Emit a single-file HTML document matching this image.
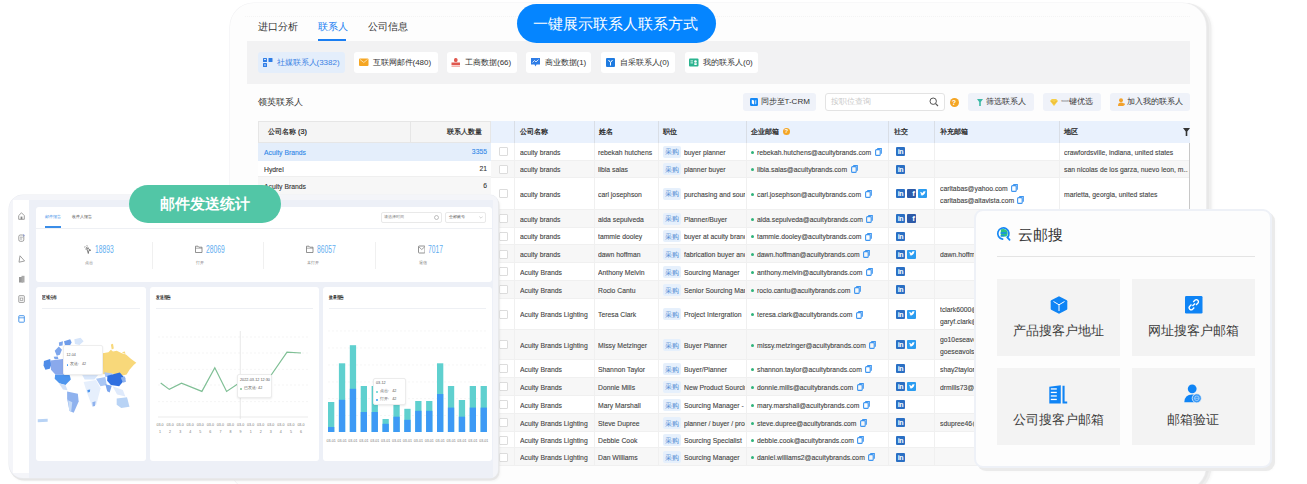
<!DOCTYPE html><html><head><meta charset="utf-8"><style>
html,body{margin:0;padding:0}
body{width:1307px;height:484px;overflow:hidden;background:#fff;position:relative;font-family:'Liberation Sans', sans-serif}
div{box-sizing:border-box}
.en{letter-spacing:-0.5px}
</style></head><body>
<div style="position:absolute;left:230px;top:3px;width:976px;height:487px;background:#fdfdfd;border-radius:24px;box-shadow:0 0 0 0.6px #f1f1f3, 2px 1px 0 1px #e8e8e8, 4px 1.5px 0 1.5px #efefef, 6px 2px 3px 1px rgba(0,0,0,0.03);"></div>
<div style="position:absolute;left:245px;top:16px;width:945px;height:1px;border-top:1px dotted #f4f4f4;"></div>
<div style="position:absolute;left:258px;top:19.50px;height:14.00px;line-height:14.00px;font-size:10px;color:#333;white-space:nowrap;">进口分析</div>
<div style="position:absolute;left:318px;top:19.50px;height:14.00px;line-height:14.00px;font-size:10px;color:#1a7ef2;white-space:nowrap;">联系人</div>
<div style="position:absolute;left:368px;top:19.50px;height:14.00px;line-height:14.00px;font-size:10px;color:#333;white-space:nowrap;">公司信息</div>
<div style="position:absolute;left:318px;top:39px;width:28px;height:2.5px;background:#1a7ef2;"></div>
<div style="position:absolute;left:247px;top:41px;width:943px;height:43px;background:#f2f2f3;"></div>
<div style="position:absolute;left:258px;top:52px;width:87px;height:21px;background:#e4eefb;border-radius:3px;"></div>
<svg style="position:absolute;left:262.5px;top:58px" width="10" height="9" viewBox="0 0 10 9"><rect x="0" y="0" width="4" height="4" rx="0.6" fill="#2f7de6"/><rect x="5.5" y="0" width="4" height="4" rx="0.6" fill="#2f7de6"/><rect x="0" y="5" width="4" height="4" rx="0.6" fill="#2f7de6"/><rect x="1" y="1" width="2" height="1" fill="#cfe2fb"/><rect x="1" y="6.5" width="2" height="1" fill="#cfe2fb"/></svg>
<div style="position:absolute;left:276.5px;top:57.20px;height:11.20px;line-height:11.20px;font-size:8px;color:#3b82e4;white-space:nowrap;">社媒联系人(3382)</div>
<div style="position:absolute;left:354px;top:52px;width:83.5px;height:21px;background:#ffffff;border-radius:3px;"></div>
<svg style="position:absolute;left:358.5px;top:58px" width="10" height="9" viewBox="0 0 10 9"><rect x="0" y="0.5" width="9.5" height="7.5" rx="1" fill="#f5a623"/><path d="M1 1.5 L4.75 4.5 L8.5 1.5" fill="none" stroke="#fff5dc" stroke-width="0.7"/></svg>
<div style="position:absolute;left:372.5px;top:57.20px;height:11.20px;line-height:11.20px;font-size:8px;color:#333;white-space:nowrap;">互联网邮件(480)</div>
<div style="position:absolute;left:446.5px;top:52px;width:70.5px;height:21px;background:#ffffff;border-radius:3px;"></div>
<svg style="position:absolute;left:451.0px;top:58px" width="10" height="9" viewBox="0 0 10 9"><rect x="3" y="0" width="3.5" height="4" rx="1.5" fill="#e0584f"/><rect x="0.5" y="4.5" width="8.5" height="2.5" fill="#e0584f"/><rect x="0.5" y="7.5" width="8.5" height="1.3" fill="#f0a09a"/></svg>
<div style="position:absolute;left:465.0px;top:57.20px;height:11.20px;line-height:11.20px;font-size:8px;color:#333;white-space:nowrap;">工商数据(66)</div>
<div style="position:absolute;left:526px;top:52px;width:65px;height:21px;background:#ffffff;border-radius:3px;"></div>
<svg style="position:absolute;left:530.5px;top:58px" width="10" height="9" viewBox="0 0 10 9"><path d="M0 0 H9 V6.5 H5.5 L4.5 8.5 L3.5 6.5 H0Z" fill="#2f7de6"/><path d="M1.5 4.5 L3.5 2.5 L5 4 L7.5 1.5" fill="none" stroke="#fff" stroke-width="0.8"/></svg>
<div style="position:absolute;left:544.5px;top:57.20px;height:11.20px;line-height:11.20px;font-size:8px;color:#333;white-space:nowrap;">商业数据(1)</div>
<div style="position:absolute;left:601px;top:52px;width:74px;height:21px;background:#ffffff;border-radius:3px;"></div>
<svg style="position:absolute;left:605.5px;top:58px" width="10" height="9" viewBox="0 0 10 9"><rect x="0" y="0" width="9" height="9" rx="1" fill="#1f7be0"/><path d="M2.5 2 L4.5 4.5 L6.5 2 M4.5 4.5 V7.5" fill="none" stroke="#fff" stroke-width="1"/></svg>
<div style="position:absolute;left:619.5px;top:57.20px;height:11.20px;line-height:11.20px;font-size:8px;color:#333;white-space:nowrap;">自采联系人(0)</div>
<div style="position:absolute;left:684.5px;top:52px;width:73.5px;height:21px;background:#ffffff;border-radius:3px;"></div>
<svg style="position:absolute;left:689.0px;top:58px" width="10" height="9" viewBox="0 0 10 9"><rect x="0" y="0.5" width="9.5" height="8" rx="1" fill="#2bb38f"/><circle cx="6.5" cy="3.5" r="1.3" fill="#fff"/><rect x="5" y="5.3" width="3" height="1.6" rx="0.8" fill="#fff"/><rect x="1.5" y="2.5" width="2.5" height="0.8" fill="#fff"/><rect x="1.5" y="4.5" width="2.5" height="0.8" fill="#fff"/></svg>
<div style="position:absolute;left:703.0px;top:57.20px;height:11.20px;line-height:11.20px;font-size:8px;color:#333;white-space:nowrap;">我的联系人(0)</div>
<div style="position:absolute;left:258px;top:96.00px;height:12.60px;line-height:12.60px;font-size:9px;color:#333;white-space:nowrap;">领英联系人</div>
<div style="position:absolute;left:742.5px;top:93px;width:73.0px;height:18px;background:#eff2f9;border-radius:3px;"></div>
<svg style="position:absolute;left:750px;top:98px" width="8" height="8" viewBox="0 0 8 8"><rect width="8" height="8" rx="1.2" fill="#1689f5"/><path d="M1.8 1.8 L4 2.6 V6.6 L1.8 5.6Z" fill="#fff"/><path d="M4.8 2.6 L6.3 2 V5.8 L4.8 6.4Z" fill="#9fd0fb"/></svg>
<div style="position:absolute;left:760.5px;top:96.40px;height:11.20px;line-height:11.20px;font-size:8px;color:#333;white-space:nowrap;">同步至T-CRM</div>
<div style="position:absolute;left:824.5px;top:92.5px;width:120.0px;height:18.5px;background:#fff;border:1px solid #e3e3e3;border-radius:3px;"></div>
<div style="position:absolute;left:831px;top:96.40px;height:11.20px;line-height:11.20px;font-size:8px;color:#c8c8c8;white-space:nowrap;">按职位查询</div>
<svg style="position:absolute;left:929px;top:97px" width="10" height="10" viewBox="0 0 10 10"><circle cx="4.2" cy="4.2" r="3.2" fill="none" stroke="#555" stroke-width="1"/><line x1="6.6" y1="6.6" x2="9" y2="9" stroke="#555" stroke-width="1.1"/></svg>
<div style="position:absolute;left:949.5px;top:97.5px;width:9.0px;height:9.0px;background:#f4a524;border-radius:50%;color:#fff;font-size:7px;line-height:9px;text-align:center;font-weight:bold;">?</div>
<div style="position:absolute;left:968px;top:93px;width:65.5px;height:18px;background:#eff2f9;border-radius:3px;"></div>
<svg style="position:absolute;left:976.5px;top:98.5px" width="6" height="7" viewBox="0 0 6 7"><path d="M0 0 H6 L3.8 3 V7 H2.2 V3Z" fill="#3cb9a6"/></svg>
<div style="position:absolute;left:985.5px;top:96.40px;height:11.20px;line-height:11.20px;font-size:8px;color:#333;white-space:nowrap;">筛选联系人</div>
<div style="position:absolute;left:1043px;top:93px;width:57.5px;height:18px;background:#eff2f9;border-radius:3px;"></div>
<svg style="position:absolute;left:1050px;top:98.5px" width="8" height="7" viewBox="0 0 8 7"><path d="M0 2 L1.8 0 H6.2 L8 2 L4 7Z" fill="#f5cf4a"/><path d="M1.5 2 L4 4.5 L6.5 2" fill="none" stroke="#e8a820" stroke-width="0.7"/></svg>
<div style="position:absolute;left:1060.5px;top:96.40px;height:11.20px;line-height:11.20px;font-size:8px;color:#333;white-space:nowrap;">一键优选</div>
<div style="position:absolute;left:1109.5px;top:93px;width:80.5px;height:18px;background:#eff2f9;border-radius:3px;"></div>
<svg style="position:absolute;left:1118px;top:98px" width="7" height="8" viewBox="0 0 7 8"><circle cx="3" cy="2.2" r="2" fill="#f2a12a"/><path d="M0 8 Q0 4.6 3 4.6 Q5 4.6 5.6 6 V8Z" fill="#f2a12a"/><rect x="4.6" y="5.8" width="2.4" height="0.9" fill="#f2a12a"/><rect x="5.35" y="5" width="0.9" height="2.5" fill="#f2a12a"/></svg>
<div style="position:absolute;left:1127px;top:96.40px;height:11.20px;line-height:11.20px;font-size:8px;color:#333;white-space:nowrap;">加入我的联系人</div>
<div style="position:absolute;left:258px;top:120.5px;width:233px;height:22.5px;background:#f5f5f5;border:1px solid #e6e6e6;"></div>
<div style="position:absolute;left:410px;top:120.5px;width:1px;height:22.5px;background:#e6e6e6;"></div>
<div style="position:absolute;left:268px;top:126.96px;height:10.08px;line-height:10.08px;font-size:7.2px;color:#222;white-space:nowrap;-webkit-text-stroke:0.2px #222;">公司名称 (3)</div>
<div style="position:absolute;left:0px;top:126.96px;height:10.08px;line-height:10.08px;font-size:7.2px;color:#222;white-space:nowrap;width:482px;text-align:right;-webkit-text-stroke:0.2px #222;">联系人数量</div>
<div style="position:absolute;left:258px;top:143px;width:233px;height:18px;background:#e4eefb;"></div>
<div style="position:absolute;left:258px;top:161px;width:233px;height:16px;background:#fff;border-bottom:1px solid #efefef;"></div>
<div style="position:absolute;left:258px;top:177px;width:233px;height:17px;background:#f7f7f7;"></div>
<div style="position:absolute;left:263.5px;top:147.30px;width:140px;height:12px;overflow:hidden;"><div style="line-height:12px;font-size:8px;color:#2f86e8;white-space:nowrap;transform:scaleX(0.85);transform-origin:0 50%;-webkit-text-stroke:0.12px currentColor;">Acuity Brands</div></div>
<div style="position:absolute;left:426.5px;top:146.3px;width:60px;height:12px;line-height:12px;font-size:8px;color:#2f86e8;text-align:right;white-space:nowrap;transform:scaleX(0.85);transform-origin:100% 50%;-webkit-text-stroke:0.1px currentColor;">3355</div>
<div style="position:absolute;left:263.5px;top:164.30px;width:140px;height:12px;overflow:hidden;"><div style="line-height:12px;font-size:8px;color:#333;white-space:nowrap;transform:scaleX(0.85);transform-origin:0 50%;-webkit-text-stroke:0.12px currentColor;">Hydrel</div></div>
<div style="position:absolute;left:426.5px;top:163.3px;width:60px;height:12px;line-height:12px;font-size:8px;color:#333;text-align:right;white-space:nowrap;transform:scaleX(0.85);transform-origin:100% 50%;-webkit-text-stroke:0.1px currentColor;">21</div>
<div style="position:absolute;left:263.5px;top:180.80px;width:140px;height:12px;overflow:hidden;"><div style="line-height:12px;font-size:8px;color:#333;white-space:nowrap;transform:scaleX(0.85);transform-origin:0 50%;-webkit-text-stroke:0.12px currentColor;">Acuity Brands</div></div>
<div style="position:absolute;left:426.5px;top:179.8px;width:60px;height:12px;line-height:12px;font-size:8px;color:#333;text-align:right;white-space:nowrap;transform:scaleX(0.85);transform-origin:100% 50%;-webkit-text-stroke:0.1px currentColor;">6</div>
<div style="position:absolute;left:491px;top:120.5px;width:699px;height:22.5px;background:#e9f1fd;"></div>
<div style="position:absolute;left:514px;top:121px;width:1px;height:22px;background:#d9dee6;"></div>
<div style="position:absolute;left:593.5px;top:121px;width:1.0px;height:22px;background:#d9dee6;"></div>
<div style="position:absolute;left:657.5px;top:121px;width:1.0px;height:22px;background:#d9dee6;"></div>
<div style="position:absolute;left:745.5px;top:121px;width:1.0px;height:22px;background:#d9dee6;"></div>
<div style="position:absolute;left:888px;top:121px;width:1px;height:22px;background:#d9dee6;"></div>
<div style="position:absolute;left:934px;top:121px;width:1px;height:22px;background:#d9dee6;"></div>
<div style="position:absolute;left:1058.5px;top:121px;width:1.0px;height:22px;background:#d9dee6;"></div>
<div style="position:absolute;left:519.5px;top:127.10px;height:9.80px;line-height:9.80px;font-size:7px;color:#222;white-space:nowrap;-webkit-text-stroke:0.25px #222;">公司名称</div>
<div style="position:absolute;left:599.0px;top:127.10px;height:9.80px;line-height:9.80px;font-size:7px;color:#222;white-space:nowrap;-webkit-text-stroke:0.25px #222;">姓名</div>
<div style="position:absolute;left:663.0px;top:127.10px;height:9.80px;line-height:9.80px;font-size:7px;color:#222;white-space:nowrap;-webkit-text-stroke:0.25px #222;">职位</div>
<div style="position:absolute;left:751.0px;top:127.10px;height:9.80px;line-height:9.80px;font-size:7px;color:#222;white-space:nowrap;-webkit-text-stroke:0.25px #222;">企业邮箱</div>
<div style="position:absolute;left:893.5px;top:127.10px;height:9.80px;line-height:9.80px;font-size:7px;color:#222;white-space:nowrap;-webkit-text-stroke:0.25px #222;">社交</div>
<div style="position:absolute;left:939.5px;top:127.10px;height:9.80px;line-height:9.80px;font-size:7px;color:#222;white-space:nowrap;-webkit-text-stroke:0.25px #222;">补充邮箱</div>
<div style="position:absolute;left:1064.0px;top:127.10px;height:9.80px;line-height:9.80px;font-size:7px;color:#222;white-space:nowrap;-webkit-text-stroke:0.25px #222;">地区</div>
<div style="position:absolute;left:782.8px;top:128.3px;width:7.2000000000000455px;height:7.199999999999989px;background:#f4a524;border-radius:50%;color:#fff;font-size:6px;line-height:7.2px;text-align:center;font-weight:bold;">?</div>
<svg style="position:absolute;left:1183px;top:128px" width="7" height="8" viewBox="0 0 7 8"><path d="M0 0H7L4.3 3.5V8H2.7V3.5Z" fill="#333"/></svg>
<div style="position:absolute;left:491px;top:143px;width:699px;height:17.5px;background:#ffffff;border-bottom:1px solid #f0f0f0;"></div>
<div style="position:absolute;left:514px;top:143px;width:1px;height:17.5px;background:#f0f0f0;"></div>
<div style="position:absolute;left:593.5px;top:143px;width:1.0px;height:17.5px;background:#f0f0f0;"></div>
<div style="position:absolute;left:657.5px;top:143px;width:1.0px;height:17.5px;background:#f0f0f0;"></div>
<div style="position:absolute;left:745.5px;top:143px;width:1.0px;height:17.5px;background:#f0f0f0;"></div>
<div style="position:absolute;left:888px;top:143px;width:1px;height:17.5px;background:#f0f0f0;"></div>
<div style="position:absolute;left:934px;top:143px;width:1px;height:17.5px;background:#f0f0f0;"></div>
<div style="position:absolute;left:1058.5px;top:143px;width:1.0px;height:17.5px;background:#f0f0f0;"></div>
<div style="position:absolute;left:498.5px;top:147.25px;width:9.0px;height:9.0px;background:#fff;border:1px solid #dcdcdc;border-radius:1px;"></div>
<div style="position:absolute;left:519.5px;top:146.75px;width:73px;height:12px;overflow:hidden;"><div style="line-height:12px;font-size:8px;color:#444;white-space:nowrap;transform:scaleX(0.85);transform-origin:0 50%;-webkit-text-stroke:0.12px currentColor;">acuity brands</div></div>
<div style="position:absolute;left:598px;top:146.75px;width:59px;height:12px;overflow:hidden;"><div style="line-height:12px;font-size:8px;color:#444;white-space:nowrap;transform:scaleX(0.85);transform-origin:0 50%;-webkit-text-stroke:0.12px currentColor;">rebekah hutchens</div></div>
<div style="position:absolute;left:662.5px;top:145.75px;width:18.5px;height:12.0px;background:#e6f0fc;border-radius:2px;"></div>
<div style="position:absolute;left:665px;top:147.49px;height:9.52px;line-height:9.52px;font-size:6.8px;color:#4a86d2;white-space:nowrap;">采购</div>
<div style="position:absolute;left:683.5px;top:146.75px;width:61.5px;height:12px;overflow:hidden;"><div style="line-height:12px;font-size:8px;color:#444;white-space:nowrap;transform:scaleX(0.85);transform-origin:0 50%;-webkit-text-stroke:0.12px currentColor;">buyer planner</div></div>
<div style="position:absolute;left:751px;top:150.75px;width:3px;height:3.0px;background:#2fb37a;border-radius:50%;"></div>
<div style="position:absolute;left:757px;top:146.75px;width:140px;height:12px;overflow:hidden;"><div style="line-height:12px;font-size:8px;color:#444;white-space:nowrap;transform:scaleX(0.85);transform-origin:0 50%;-webkit-text-stroke:0.12px currentColor;">rebekah.hutchens@acuitybrands.com</div></div>
<svg style="position:absolute;left:874.75859375px;top:147.95px" width="7" height="8" viewBox="0 0 7 8"><rect x="0.6" y="1.6" width="4.6" height="5.8" rx="1" fill="none" stroke="#3d95f0" stroke-width="1.1"/><path d="M2.2 0.6H6.3V5.8" fill="none" stroke="#3d95f0" stroke-width="1.1"/></svg>
<div style="position:absolute;left:896px;top:147.25px;width:9px;height:9.0px;background:#2a6fc4;border-radius:1px;color:#fff;font-size:7px;line-height:9px;font-weight:bold;text-align:center;letter-spacing:-0.3px;">in</div>
<div style="position:absolute;left:1063.5px;top:146.75px;width:124px;height:12px;overflow:hidden;"><div style="line-height:12px;font-size:8px;color:#444;white-space:nowrap;transform:scaleX(0.85);transform-origin:0 50%;-webkit-text-stroke:0.12px currentColor;">crawfordsville, indiana, united states</div></div>
<div style="position:absolute;left:491px;top:160.5px;width:699px;height:17.5px;background:#f7f7f7;border-bottom:1px solid #f0f0f0;"></div>
<div style="position:absolute;left:514px;top:160.5px;width:1px;height:17.5px;background:#f0f0f0;"></div>
<div style="position:absolute;left:593.5px;top:160.5px;width:1.0px;height:17.5px;background:#f0f0f0;"></div>
<div style="position:absolute;left:657.5px;top:160.5px;width:1.0px;height:17.5px;background:#f0f0f0;"></div>
<div style="position:absolute;left:745.5px;top:160.5px;width:1.0px;height:17.5px;background:#f0f0f0;"></div>
<div style="position:absolute;left:888px;top:160.5px;width:1px;height:17.5px;background:#f0f0f0;"></div>
<div style="position:absolute;left:934px;top:160.5px;width:1px;height:17.5px;background:#f0f0f0;"></div>
<div style="position:absolute;left:1058.5px;top:160.5px;width:1.0px;height:17.5px;background:#f0f0f0;"></div>
<div style="position:absolute;left:498.5px;top:164.75px;width:9.0px;height:9.0px;background:#fff;border:1px solid #dcdcdc;border-radius:1px;"></div>
<div style="position:absolute;left:519.5px;top:164.25px;width:73px;height:12px;overflow:hidden;"><div style="line-height:12px;font-size:8px;color:#444;white-space:nowrap;transform:scaleX(0.85);transform-origin:0 50%;-webkit-text-stroke:0.12px currentColor;">acuity brands</div></div>
<div style="position:absolute;left:598px;top:164.25px;width:59px;height:12px;overflow:hidden;"><div style="line-height:12px;font-size:8px;color:#444;white-space:nowrap;transform:scaleX(0.85);transform-origin:0 50%;-webkit-text-stroke:0.12px currentColor;">libia salas</div></div>
<div style="position:absolute;left:662.5px;top:163.25px;width:18.5px;height:12.0px;background:#e6f0fc;border-radius:2px;"></div>
<div style="position:absolute;left:665px;top:164.99px;height:9.52px;line-height:9.52px;font-size:6.8px;color:#4a86d2;white-space:nowrap;">采购</div>
<div style="position:absolute;left:683.5px;top:164.25px;width:61.5px;height:12px;overflow:hidden;"><div style="line-height:12px;font-size:8px;color:#444;white-space:nowrap;transform:scaleX(0.85);transform-origin:0 50%;-webkit-text-stroke:0.12px currentColor;">planner buyer</div></div>
<div style="position:absolute;left:751px;top:168.25px;width:3px;height:3.0px;background:#2fb37a;border-radius:50%;"></div>
<div style="position:absolute;left:757px;top:164.25px;width:140px;height:12px;overflow:hidden;"><div style="line-height:12px;font-size:8px;color:#444;white-space:nowrap;transform:scaleX(0.85);transform-origin:0 50%;-webkit-text-stroke:0.12px currentColor;">libia.salas@acuitybrands.com</div></div>
<svg style="position:absolute;left:850.56015625px;top:165.45px" width="7" height="8" viewBox="0 0 7 8"><rect x="0.6" y="1.6" width="4.6" height="5.8" rx="1" fill="none" stroke="#3d95f0" stroke-width="1.1"/><path d="M2.2 0.6H6.3V5.8" fill="none" stroke="#3d95f0" stroke-width="1.1"/></svg>
<div style="position:absolute;left:896px;top:164.75px;width:9px;height:9.0px;background:#2a6fc4;border-radius:1px;color:#fff;font-size:7px;line-height:9px;font-weight:bold;text-align:center;letter-spacing:-0.3px;">in</div>
<div style="position:absolute;left:1063.5px;top:164.25px;width:124px;height:12px;overflow:hidden;"><div style="line-height:12px;font-size:8px;color:#444;white-space:nowrap;transform:scaleX(0.85);transform-origin:0 50%;-webkit-text-stroke:0.12px currentColor;">san nicolas de los garza, nuevo leon, m...</div></div>
<div style="position:absolute;left:491px;top:178px;width:699px;height:31.5px;background:#ffffff;border-bottom:1px solid #f0f0f0;"></div>
<div style="position:absolute;left:514px;top:178px;width:1px;height:31.5px;background:#f0f0f0;"></div>
<div style="position:absolute;left:593.5px;top:178px;width:1.0px;height:31.5px;background:#f0f0f0;"></div>
<div style="position:absolute;left:657.5px;top:178px;width:1.0px;height:31.5px;background:#f0f0f0;"></div>
<div style="position:absolute;left:745.5px;top:178px;width:1.0px;height:31.5px;background:#f0f0f0;"></div>
<div style="position:absolute;left:888px;top:178px;width:1px;height:31.5px;background:#f0f0f0;"></div>
<div style="position:absolute;left:934px;top:178px;width:1px;height:31.5px;background:#f0f0f0;"></div>
<div style="position:absolute;left:1058.5px;top:178px;width:1.0px;height:31.5px;background:#f0f0f0;"></div>
<div style="position:absolute;left:498.5px;top:189.25px;width:9.0px;height:9.0px;background:#fff;border:1px solid #dcdcdc;border-radius:1px;"></div>
<div style="position:absolute;left:519.5px;top:188.75px;width:73px;height:12px;overflow:hidden;"><div style="line-height:12px;font-size:8px;color:#444;white-space:nowrap;transform:scaleX(0.85);transform-origin:0 50%;-webkit-text-stroke:0.12px currentColor;">acuity brands</div></div>
<div style="position:absolute;left:598px;top:188.75px;width:59px;height:12px;overflow:hidden;"><div style="line-height:12px;font-size:8px;color:#444;white-space:nowrap;transform:scaleX(0.85);transform-origin:0 50%;-webkit-text-stroke:0.12px currentColor;">carl josephson</div></div>
<div style="position:absolute;left:662.5px;top:187.75px;width:18.5px;height:12.0px;background:#e6f0fc;border-radius:2px;"></div>
<div style="position:absolute;left:665px;top:189.49px;height:9.52px;line-height:9.52px;font-size:6.8px;color:#4a86d2;white-space:nowrap;">采购</div>
<div style="position:absolute;left:683.5px;top:188.75px;width:61.5px;height:12px;overflow:hidden;"><div style="line-height:12px;font-size:8px;color:#444;white-space:nowrap;transform:scaleX(0.85);transform-origin:0 50%;-webkit-text-stroke:0.12px currentColor;">purchasing and sour</div></div>
<div style="position:absolute;left:751px;top:192.75px;width:3px;height:3.0px;background:#2fb37a;border-radius:50%;"></div>
<div style="position:absolute;left:757px;top:188.75px;width:140px;height:12px;overflow:hidden;"><div style="line-height:12px;font-size:8px;color:#444;white-space:nowrap;transform:scaleX(0.85);transform-origin:0 50%;-webkit-text-stroke:0.12px currentColor;">carl.josephson@acuitybrands.com</div></div>
<svg style="position:absolute;left:864.5453125px;top:189.95px" width="7" height="8" viewBox="0 0 7 8"><rect x="0.6" y="1.6" width="4.6" height="5.8" rx="1" fill="none" stroke="#3d95f0" stroke-width="1.1"/><path d="M2.2 0.6H6.3V5.8" fill="none" stroke="#3d95f0" stroke-width="1.1"/></svg>
<div style="position:absolute;left:896px;top:189.25px;width:9px;height:9.0px;background:#2a6fc4;border-radius:1px;color:#fff;font-size:7px;line-height:9px;font-weight:bold;text-align:center;letter-spacing:-0.3px;">in</div>
<div style="position:absolute;left:907px;top:189.25px;width:9px;height:9.0px;background:#2d5aa8;border-radius:1px;color:#fff;font-size:8px;line-height:10px;font-weight:bold;text-align:right;padding-right:1px;">f</div>
<div style="position:absolute;left:918px;top:189.25px;width:9px;height:9.0px;background:#2b9cf0;border-radius:1px;"></div>
<svg style="position:absolute;left:919.5px;top:190.75px" width="6" height="6" viewBox="0 0 6 6"><path d="M0.3 4.6 Q2.6 5.2 4 3.6 Q5.2 2.2 5.3 1 L6 0.4 L5.2 0.6 Q4.4 -0.2 3.4 0.5 Q2.7 1.1 3 1.9 Q1.6 1.8 0.5 0.8 Q0 2.2 1.2 3 L0.6 3 Q1 4 2 4.2 Q1.2 4.7 0.3 4.6Z" fill="#fff"/></svg>
<div style="position:absolute;left:939.5px;top:182.95px;width:118px;height:12px;overflow:hidden;"><div style="line-height:12px;font-size:8px;color:#444;white-space:nowrap;transform:scaleX(0.85);transform-origin:0 50%;-webkit-text-stroke:0.12px currentColor;">carltabas@yahoo.com</div></div>
<div style="position:absolute;left:939.5px;top:195.25px;width:118px;height:12px;overflow:hidden;"><div style="line-height:12px;font-size:8px;color:#444;white-space:nowrap;transform:scaleX(0.85);transform-origin:0 50%;-webkit-text-stroke:0.12px currentColor;">carltabas@altavista.com</div></div>
<svg style="position:absolute;left:1010.7609375px;top:184.14999999999998px" width="7" height="8" viewBox="0 0 7 8"><rect x="0.6" y="1.6" width="4.6" height="5.8" rx="1" fill="none" stroke="#3d95f0" stroke-width="1.1"/><path d="M2.2 0.6H6.3V5.8" fill="none" stroke="#3d95f0" stroke-width="1.1"/></svg>
<svg style="position:absolute;left:1017.17578125px;top:196.45px" width="7" height="8" viewBox="0 0 7 8"><rect x="0.6" y="1.6" width="4.6" height="5.8" rx="1" fill="none" stroke="#3d95f0" stroke-width="1.1"/><path d="M2.2 0.6H6.3V5.8" fill="none" stroke="#3d95f0" stroke-width="1.1"/></svg>
<div style="position:absolute;left:1063.5px;top:188.75px;width:124px;height:12px;overflow:hidden;"><div style="line-height:12px;font-size:8px;color:#444;white-space:nowrap;transform:scaleX(0.85);transform-origin:0 50%;-webkit-text-stroke:0.12px currentColor;">marietta, georgia, united states</div></div>
<div style="position:absolute;left:491px;top:209.5px;width:699px;height:18.19999999999999px;background:#f7f7f7;border-bottom:1px solid #f0f0f0;"></div>
<div style="position:absolute;left:514px;top:209.5px;width:1px;height:18.19999999999999px;background:#f0f0f0;"></div>
<div style="position:absolute;left:593.5px;top:209.5px;width:1.0px;height:18.19999999999999px;background:#f0f0f0;"></div>
<div style="position:absolute;left:657.5px;top:209.5px;width:1.0px;height:18.19999999999999px;background:#f0f0f0;"></div>
<div style="position:absolute;left:745.5px;top:209.5px;width:1.0px;height:18.19999999999999px;background:#f0f0f0;"></div>
<div style="position:absolute;left:888px;top:209.5px;width:1px;height:18.19999999999999px;background:#f0f0f0;"></div>
<div style="position:absolute;left:934px;top:209.5px;width:1px;height:18.19999999999999px;background:#f0f0f0;"></div>
<div style="position:absolute;left:1058.5px;top:209.5px;width:1.0px;height:18.19999999999999px;background:#f0f0f0;"></div>
<div style="position:absolute;left:498.5px;top:214.1px;width:9.0px;height:9.0px;background:#fff;border:1px solid #dcdcdc;border-radius:1px;"></div>
<div style="position:absolute;left:519.5px;top:213.60px;width:73px;height:12px;overflow:hidden;"><div style="line-height:12px;font-size:8px;color:#444;white-space:nowrap;transform:scaleX(0.85);transform-origin:0 50%;-webkit-text-stroke:0.12px currentColor;">acuity brands</div></div>
<div style="position:absolute;left:598px;top:213.60px;width:59px;height:12px;overflow:hidden;"><div style="line-height:12px;font-size:8px;color:#444;white-space:nowrap;transform:scaleX(0.85);transform-origin:0 50%;-webkit-text-stroke:0.12px currentColor;">aida sepulveda</div></div>
<div style="position:absolute;left:662.5px;top:212.6px;width:18.5px;height:12.0px;background:#e6f0fc;border-radius:2px;"></div>
<div style="position:absolute;left:665px;top:214.34px;height:9.52px;line-height:9.52px;font-size:6.8px;color:#4a86d2;white-space:nowrap;">采购</div>
<div style="position:absolute;left:683.5px;top:213.60px;width:61.5px;height:12px;overflow:hidden;"><div style="line-height:12px;font-size:8px;color:#444;white-space:nowrap;transform:scaleX(0.85);transform-origin:0 50%;-webkit-text-stroke:0.12px currentColor;">Planner/Buyer</div></div>
<div style="position:absolute;left:751px;top:217.6px;width:3px;height:3.0px;background:#2fb37a;border-radius:50%;"></div>
<div style="position:absolute;left:757px;top:213.60px;width:140px;height:12px;overflow:hidden;"><div style="line-height:12px;font-size:8px;color:#444;white-space:nowrap;transform:scaleX(0.85);transform-origin:0 50%;-webkit-text-stroke:0.12px currentColor;">aida.sepulveda@acuitybrands.com</div></div>
<svg style="position:absolute;left:866.44453125px;top:214.79999999999998px" width="7" height="8" viewBox="0 0 7 8"><rect x="0.6" y="1.6" width="4.6" height="5.8" rx="1" fill="none" stroke="#3d95f0" stroke-width="1.1"/><path d="M2.2 0.6H6.3V5.8" fill="none" stroke="#3d95f0" stroke-width="1.1"/></svg>
<div style="position:absolute;left:896px;top:214.1px;width:9px;height:9.0px;background:#2a6fc4;border-radius:1px;color:#fff;font-size:7px;line-height:9px;font-weight:bold;text-align:center;letter-spacing:-0.3px;">in</div>
<div style="position:absolute;left:907px;top:214.1px;width:9px;height:9.0px;background:#2d5aa8;border-radius:1px;color:#fff;font-size:8px;line-height:10px;font-weight:bold;text-align:right;padding-right:1px;">f</div>
<div style="position:absolute;left:491px;top:227.7px;width:699px;height:17.5px;background:#ffffff;border-bottom:1px solid #f0f0f0;"></div>
<div style="position:absolute;left:514px;top:227.7px;width:1px;height:17.5px;background:#f0f0f0;"></div>
<div style="position:absolute;left:593.5px;top:227.7px;width:1.0px;height:17.5px;background:#f0f0f0;"></div>
<div style="position:absolute;left:657.5px;top:227.7px;width:1.0px;height:17.5px;background:#f0f0f0;"></div>
<div style="position:absolute;left:745.5px;top:227.7px;width:1.0px;height:17.5px;background:#f0f0f0;"></div>
<div style="position:absolute;left:888px;top:227.7px;width:1px;height:17.5px;background:#f0f0f0;"></div>
<div style="position:absolute;left:934px;top:227.7px;width:1px;height:17.5px;background:#f0f0f0;"></div>
<div style="position:absolute;left:1058.5px;top:227.7px;width:1.0px;height:17.5px;background:#f0f0f0;"></div>
<div style="position:absolute;left:498.5px;top:231.95px;width:9.0px;height:9.0px;background:#fff;border:1px solid #dcdcdc;border-radius:1px;"></div>
<div style="position:absolute;left:519.5px;top:231.45px;width:73px;height:12px;overflow:hidden;"><div style="line-height:12px;font-size:8px;color:#444;white-space:nowrap;transform:scaleX(0.85);transform-origin:0 50%;-webkit-text-stroke:0.12px currentColor;">acuity brands</div></div>
<div style="position:absolute;left:598px;top:231.45px;width:59px;height:12px;overflow:hidden;"><div style="line-height:12px;font-size:8px;color:#444;white-space:nowrap;transform:scaleX(0.85);transform-origin:0 50%;-webkit-text-stroke:0.12px currentColor;">tammie dooley</div></div>
<div style="position:absolute;left:662.5px;top:230.45px;width:18.5px;height:12.0px;background:#e6f0fc;border-radius:2px;"></div>
<div style="position:absolute;left:665px;top:232.19px;height:9.52px;line-height:9.52px;font-size:6.8px;color:#4a86d2;white-space:nowrap;">采购</div>
<div style="position:absolute;left:683.5px;top:231.45px;width:61.5px;height:12px;overflow:hidden;"><div style="line-height:12px;font-size:8px;color:#444;white-space:nowrap;transform:scaleX(0.85);transform-origin:0 50%;-webkit-text-stroke:0.12px currentColor;">buyer at acuity brand</div></div>
<div style="position:absolute;left:751px;top:235.45px;width:3px;height:3.0px;background:#2fb37a;border-radius:50%;"></div>
<div style="position:absolute;left:757px;top:231.45px;width:140px;height:12px;overflow:hidden;"><div style="line-height:12px;font-size:8px;color:#444;white-space:nowrap;transform:scaleX(0.85);transform-origin:0 50%;-webkit-text-stroke:0.12px currentColor;">tammie.dooley@acuitybrands.com</div></div>
<svg style="position:absolute;left:864.9171875px;top:232.64999999999998px" width="7" height="8" viewBox="0 0 7 8"><rect x="0.6" y="1.6" width="4.6" height="5.8" rx="1" fill="none" stroke="#3d95f0" stroke-width="1.1"/><path d="M2.2 0.6H6.3V5.8" fill="none" stroke="#3d95f0" stroke-width="1.1"/></svg>
<div style="position:absolute;left:896px;top:231.95px;width:9px;height:9.0px;background:#2a6fc4;border-radius:1px;color:#fff;font-size:7px;line-height:9px;font-weight:bold;text-align:center;letter-spacing:-0.3px;">in</div>
<div style="position:absolute;left:491px;top:245.2px;width:699px;height:17.80000000000001px;background:#f7f7f7;border-bottom:1px solid #f0f0f0;"></div>
<div style="position:absolute;left:514px;top:245.2px;width:1px;height:17.80000000000001px;background:#f0f0f0;"></div>
<div style="position:absolute;left:593.5px;top:245.2px;width:1.0px;height:17.80000000000001px;background:#f0f0f0;"></div>
<div style="position:absolute;left:657.5px;top:245.2px;width:1.0px;height:17.80000000000001px;background:#f0f0f0;"></div>
<div style="position:absolute;left:745.5px;top:245.2px;width:1.0px;height:17.80000000000001px;background:#f0f0f0;"></div>
<div style="position:absolute;left:888px;top:245.2px;width:1px;height:17.80000000000001px;background:#f0f0f0;"></div>
<div style="position:absolute;left:934px;top:245.2px;width:1px;height:17.80000000000001px;background:#f0f0f0;"></div>
<div style="position:absolute;left:1058.5px;top:245.2px;width:1.0px;height:17.80000000000001px;background:#f0f0f0;"></div>
<div style="position:absolute;left:498.5px;top:249.6px;width:9.0px;height:9.000000000000028px;background:#fff;border:1px solid #dcdcdc;border-radius:1px;"></div>
<div style="position:absolute;left:519.5px;top:249.10px;width:73px;height:12px;overflow:hidden;"><div style="line-height:12px;font-size:8px;color:#444;white-space:nowrap;transform:scaleX(0.85);transform-origin:0 50%;-webkit-text-stroke:0.12px currentColor;">acuity brands</div></div>
<div style="position:absolute;left:598px;top:249.10px;width:59px;height:12px;overflow:hidden;"><div style="line-height:12px;font-size:8px;color:#444;white-space:nowrap;transform:scaleX(0.85);transform-origin:0 50%;-webkit-text-stroke:0.12px currentColor;">dawn hoffman</div></div>
<div style="position:absolute;left:662.5px;top:248.1px;width:18.5px;height:12.000000000000028px;background:#e6f0fc;border-radius:2px;"></div>
<div style="position:absolute;left:665px;top:249.84px;height:9.52px;line-height:9.52px;font-size:6.8px;color:#4a86d2;white-space:nowrap;">采购</div>
<div style="position:absolute;left:683.5px;top:249.10px;width:61.5px;height:12px;overflow:hidden;"><div style="line-height:12px;font-size:8px;color:#444;white-space:nowrap;transform:scaleX(0.85);transform-origin:0 50%;-webkit-text-stroke:0.12px currentColor;">fabrication buyer and</div></div>
<div style="position:absolute;left:751px;top:253.1px;width:3px;height:3.0000000000000284px;background:#2fb37a;border-radius:50%;"></div>
<div style="position:absolute;left:757px;top:249.10px;width:140px;height:12px;overflow:hidden;"><div style="line-height:12px;font-size:8px;color:#444;white-space:nowrap;transform:scaleX(0.85);transform-origin:0 50%;-webkit-text-stroke:0.12px currentColor;">dawn.hoffman@acuitybrands.com</div></div>
<svg style="position:absolute;left:863.296875px;top:250.29999999999998px" width="7" height="8" viewBox="0 0 7 8"><rect x="0.6" y="1.6" width="4.6" height="5.8" rx="1" fill="none" stroke="#3d95f0" stroke-width="1.1"/><path d="M2.2 0.6H6.3V5.8" fill="none" stroke="#3d95f0" stroke-width="1.1"/></svg>
<div style="position:absolute;left:896px;top:249.6px;width:9px;height:9.000000000000028px;background:#2a6fc4;border-radius:1px;color:#fff;font-size:7px;line-height:9px;font-weight:bold;text-align:center;letter-spacing:-0.3px;">in</div>
<div style="position:absolute;left:907px;top:249.6px;width:9px;height:9.000000000000028px;background:#2b9cf0;border-radius:1px;"></div>
<svg style="position:absolute;left:908.5px;top:251.1px" width="6" height="6" viewBox="0 0 6 6"><path d="M0.3 4.6 Q2.6 5.2 4 3.6 Q5.2 2.2 5.3 1 L6 0.4 L5.2 0.6 Q4.4 -0.2 3.4 0.5 Q2.7 1.1 3 1.9 Q1.6 1.8 0.5 0.8 Q0 2.2 1.2 3 L0.6 3 Q1 4 2 4.2 Q1.2 4.7 0.3 4.6Z" fill="#fff"/></svg>
<div style="position:absolute;left:939.5px;top:249.10px;width:118px;height:12px;overflow:hidden;"><div style="line-height:12px;font-size:8px;color:#444;white-space:nowrap;transform:scaleX(0.85);transform-origin:0 50%;-webkit-text-stroke:0.12px currentColor;">dawn.hoffman@acuity</div></div>
<div style="position:absolute;left:491px;top:263px;width:699px;height:17.600000000000023px;background:#ffffff;border-bottom:1px solid #f0f0f0;"></div>
<div style="position:absolute;left:514px;top:263px;width:1px;height:17.600000000000023px;background:#f0f0f0;"></div>
<div style="position:absolute;left:593.5px;top:263px;width:1.0px;height:17.600000000000023px;background:#f0f0f0;"></div>
<div style="position:absolute;left:657.5px;top:263px;width:1.0px;height:17.600000000000023px;background:#f0f0f0;"></div>
<div style="position:absolute;left:745.5px;top:263px;width:1.0px;height:17.600000000000023px;background:#f0f0f0;"></div>
<div style="position:absolute;left:888px;top:263px;width:1px;height:17.600000000000023px;background:#f0f0f0;"></div>
<div style="position:absolute;left:934px;top:263px;width:1px;height:17.600000000000023px;background:#f0f0f0;"></div>
<div style="position:absolute;left:1058.5px;top:263px;width:1.0px;height:17.600000000000023px;background:#f0f0f0;"></div>
<div style="position:absolute;left:498.5px;top:267.3px;width:9.0px;height:9.0px;background:#fff;border:1px solid #dcdcdc;border-radius:1px;"></div>
<div style="position:absolute;left:519.5px;top:266.80px;width:73px;height:12px;overflow:hidden;"><div style="line-height:12px;font-size:8px;color:#444;white-space:nowrap;transform:scaleX(0.85);transform-origin:0 50%;-webkit-text-stroke:0.12px currentColor;">Acuity Brands</div></div>
<div style="position:absolute;left:598px;top:266.80px;width:59px;height:12px;overflow:hidden;"><div style="line-height:12px;font-size:8px;color:#444;white-space:nowrap;transform:scaleX(0.85);transform-origin:0 50%;-webkit-text-stroke:0.12px currentColor;">Anthony Melvin</div></div>
<div style="position:absolute;left:662.5px;top:265.8px;width:18.5px;height:12.0px;background:#e6f0fc;border-radius:2px;"></div>
<div style="position:absolute;left:665px;top:267.54px;height:9.52px;line-height:9.52px;font-size:6.8px;color:#4a86d2;white-space:nowrap;">采购</div>
<div style="position:absolute;left:683.5px;top:266.80px;width:61.5px;height:12px;overflow:hidden;"><div style="line-height:12px;font-size:8px;color:#444;white-space:nowrap;transform:scaleX(0.85);transform-origin:0 50%;-webkit-text-stroke:0.12px currentColor;">Sourcing Manager</div></div>
<div style="position:absolute;left:751px;top:270.8px;width:3px;height:3.0px;background:#2fb37a;border-radius:50%;"></div>
<div style="position:absolute;left:757px;top:266.80px;width:140px;height:12px;overflow:hidden;"><div style="line-height:12px;font-size:8px;color:#444;white-space:nowrap;transform:scaleX(0.85);transform-origin:0 50%;-webkit-text-stroke:0.12px currentColor;">anthony.melvin@acuitybrands.com</div></div>
<svg style="position:absolute;left:865.9265625px;top:268.0px" width="7" height="8" viewBox="0 0 7 8"><rect x="0.6" y="1.6" width="4.6" height="5.8" rx="1" fill="none" stroke="#3d95f0" stroke-width="1.1"/><path d="M2.2 0.6H6.3V5.8" fill="none" stroke="#3d95f0" stroke-width="1.1"/></svg>
<div style="position:absolute;left:896px;top:267.3px;width:9px;height:9.0px;background:#2a6fc4;border-radius:1px;color:#fff;font-size:7px;line-height:9px;font-weight:bold;text-align:center;letter-spacing:-0.3px;">in</div>
<div style="position:absolute;left:491px;top:280.6px;width:699px;height:18.399999999999977px;background:#f7f7f7;border-bottom:1px solid #f0f0f0;"></div>
<div style="position:absolute;left:514px;top:280.6px;width:1px;height:18.399999999999977px;background:#f0f0f0;"></div>
<div style="position:absolute;left:593.5px;top:280.6px;width:1.0px;height:18.399999999999977px;background:#f0f0f0;"></div>
<div style="position:absolute;left:657.5px;top:280.6px;width:1.0px;height:18.399999999999977px;background:#f0f0f0;"></div>
<div style="position:absolute;left:745.5px;top:280.6px;width:1.0px;height:18.399999999999977px;background:#f0f0f0;"></div>
<div style="position:absolute;left:888px;top:280.6px;width:1px;height:18.399999999999977px;background:#f0f0f0;"></div>
<div style="position:absolute;left:934px;top:280.6px;width:1px;height:18.399999999999977px;background:#f0f0f0;"></div>
<div style="position:absolute;left:1058.5px;top:280.6px;width:1.0px;height:18.399999999999977px;background:#f0f0f0;"></div>
<div style="position:absolute;left:498.5px;top:285.3px;width:9.0px;height:9.0px;background:#fff;border:1px solid #dcdcdc;border-radius:1px;"></div>
<div style="position:absolute;left:519.5px;top:284.80px;width:73px;height:12px;overflow:hidden;"><div style="line-height:12px;font-size:8px;color:#444;white-space:nowrap;transform:scaleX(0.85);transform-origin:0 50%;-webkit-text-stroke:0.12px currentColor;">Acuity Brands</div></div>
<div style="position:absolute;left:598px;top:284.80px;width:59px;height:12px;overflow:hidden;"><div style="line-height:12px;font-size:8px;color:#444;white-space:nowrap;transform:scaleX(0.85);transform-origin:0 50%;-webkit-text-stroke:0.12px currentColor;">Rocio Cantu</div></div>
<div style="position:absolute;left:662.5px;top:283.8px;width:18.5px;height:12.0px;background:#e6f0fc;border-radius:2px;"></div>
<div style="position:absolute;left:665px;top:285.54px;height:9.52px;line-height:9.52px;font-size:6.8px;color:#4a86d2;white-space:nowrap;">采购</div>
<div style="position:absolute;left:683.5px;top:284.80px;width:61.5px;height:12px;overflow:hidden;"><div style="line-height:12px;font-size:8px;color:#444;white-space:nowrap;transform:scaleX(0.85);transform-origin:0 50%;-webkit-text-stroke:0.12px currentColor;">Senior Sourcing Manager</div></div>
<div style="position:absolute;left:751px;top:288.8px;width:3px;height:3.0px;background:#2fb37a;border-radius:50%;"></div>
<div style="position:absolute;left:757px;top:284.80px;width:140px;height:12px;overflow:hidden;"><div style="line-height:12px;font-size:8px;color:#444;white-space:nowrap;transform:scaleX(0.85);transform-origin:0 50%;-webkit-text-stroke:0.12px currentColor;">rocio.cantu@acuitybrands.com</div></div>
<svg style="position:absolute;left:853.96015625px;top:286.0px" width="7" height="8" viewBox="0 0 7 8"><rect x="0.6" y="1.6" width="4.6" height="5.8" rx="1" fill="none" stroke="#3d95f0" stroke-width="1.1"/><path d="M2.2 0.6H6.3V5.8" fill="none" stroke="#3d95f0" stroke-width="1.1"/></svg>
<div style="position:absolute;left:896px;top:285.3px;width:9px;height:9.0px;background:#2a6fc4;border-radius:1px;color:#fff;font-size:7px;line-height:9px;font-weight:bold;text-align:center;letter-spacing:-0.3px;">in</div>
<div style="position:absolute;left:491px;top:299px;width:699px;height:30.69999999999999px;background:#ffffff;border-bottom:1px solid #f0f0f0;"></div>
<div style="position:absolute;left:514px;top:299px;width:1px;height:30.69999999999999px;background:#f0f0f0;"></div>
<div style="position:absolute;left:593.5px;top:299px;width:1.0px;height:30.69999999999999px;background:#f0f0f0;"></div>
<div style="position:absolute;left:657.5px;top:299px;width:1.0px;height:30.69999999999999px;background:#f0f0f0;"></div>
<div style="position:absolute;left:745.5px;top:299px;width:1.0px;height:30.69999999999999px;background:#f0f0f0;"></div>
<div style="position:absolute;left:888px;top:299px;width:1px;height:30.69999999999999px;background:#f0f0f0;"></div>
<div style="position:absolute;left:934px;top:299px;width:1px;height:30.69999999999999px;background:#f0f0f0;"></div>
<div style="position:absolute;left:1058.5px;top:299px;width:1.0px;height:30.69999999999999px;background:#f0f0f0;"></div>
<div style="position:absolute;left:498.5px;top:309.85px;width:9.0px;height:9.0px;background:#fff;border:1px solid #dcdcdc;border-radius:1px;"></div>
<div style="position:absolute;left:519.5px;top:309.35px;width:73px;height:12px;overflow:hidden;"><div style="line-height:12px;font-size:8px;color:#444;white-space:nowrap;transform:scaleX(0.85);transform-origin:0 50%;-webkit-text-stroke:0.12px currentColor;">Acuity Brands Lighting</div></div>
<div style="position:absolute;left:598px;top:309.35px;width:59px;height:12px;overflow:hidden;"><div style="line-height:12px;font-size:8px;color:#444;white-space:nowrap;transform:scaleX(0.85);transform-origin:0 50%;-webkit-text-stroke:0.12px currentColor;">Teresa Clark</div></div>
<div style="position:absolute;left:662.5px;top:308.35px;width:18.5px;height:12.0px;background:#e6f0fc;border-radius:2px;"></div>
<div style="position:absolute;left:665px;top:310.09px;height:9.52px;line-height:9.52px;font-size:6.8px;color:#4a86d2;white-space:nowrap;">采购</div>
<div style="position:absolute;left:683.5px;top:309.35px;width:61.5px;height:12px;overflow:hidden;"><div style="line-height:12px;font-size:8px;color:#444;white-space:nowrap;transform:scaleX(0.85);transform-origin:0 50%;-webkit-text-stroke:0.12px currentColor;">Project Intergration</div></div>
<div style="position:absolute;left:751px;top:313.35px;width:3px;height:3.0px;background:#2fb37a;border-radius:50%;"></div>
<div style="position:absolute;left:757px;top:309.35px;width:140px;height:12px;overflow:hidden;"><div style="line-height:12px;font-size:8px;color:#444;white-space:nowrap;transform:scaleX(0.85);transform-origin:0 50%;-webkit-text-stroke:0.12px currentColor;">teresa.clark@acuitybrands.com</div></div>
<svg style="position:absolute;left:855.84609375px;top:310.55px" width="7" height="8" viewBox="0 0 7 8"><rect x="0.6" y="1.6" width="4.6" height="5.8" rx="1" fill="none" stroke="#3d95f0" stroke-width="1.1"/><path d="M2.2 0.6H6.3V5.8" fill="none" stroke="#3d95f0" stroke-width="1.1"/></svg>
<div style="position:absolute;left:896px;top:309.85px;width:9px;height:9.0px;background:#2a6fc4;border-radius:1px;color:#fff;font-size:7px;line-height:9px;font-weight:bold;text-align:center;letter-spacing:-0.3px;">in</div>
<div style="position:absolute;left:907px;top:309.85px;width:9px;height:9.0px;background:#2b9cf0;border-radius:1px;"></div>
<svg style="position:absolute;left:908.5px;top:311.35px" width="6" height="6" viewBox="0 0 6 6"><path d="M0.3 4.6 Q2.6 5.2 4 3.6 Q5.2 2.2 5.3 1 L6 0.4 L5.2 0.6 Q4.4 -0.2 3.4 0.5 Q2.7 1.1 3 1.9 Q1.6 1.8 0.5 0.8 Q0 2.2 1.2 3 L0.6 3 Q1 4 2 4.2 Q1.2 4.7 0.3 4.6Z" fill="#fff"/></svg>
<div style="position:absolute;left:939.5px;top:303.55px;width:118px;height:12px;overflow:hidden;"><div style="line-height:12px;font-size:8px;color:#444;white-space:nowrap;transform:scaleX(0.85);transform-origin:0 50%;-webkit-text-stroke:0.12px currentColor;">tclark6000@gmail.com</div></div>
<div style="position:absolute;left:939.5px;top:315.85px;width:118px;height:12px;overflow:hidden;"><div style="line-height:12px;font-size:8px;color:#444;white-space:nowrap;transform:scaleX(0.85);transform-origin:0 50%;-webkit-text-stroke:0.12px currentColor;">garyf.clark@gmail.com</div></div>
<div style="position:absolute;left:491px;top:329.7px;width:699px;height:30.30000000000001px;background:#f7f7f7;border-bottom:1px solid #f0f0f0;"></div>
<div style="position:absolute;left:514px;top:329.7px;width:1px;height:30.30000000000001px;background:#f0f0f0;"></div>
<div style="position:absolute;left:593.5px;top:329.7px;width:1.0px;height:30.30000000000001px;background:#f0f0f0;"></div>
<div style="position:absolute;left:657.5px;top:329.7px;width:1.0px;height:30.30000000000001px;background:#f0f0f0;"></div>
<div style="position:absolute;left:745.5px;top:329.7px;width:1.0px;height:30.30000000000001px;background:#f0f0f0;"></div>
<div style="position:absolute;left:888px;top:329.7px;width:1px;height:30.30000000000001px;background:#f0f0f0;"></div>
<div style="position:absolute;left:934px;top:329.7px;width:1px;height:30.30000000000001px;background:#f0f0f0;"></div>
<div style="position:absolute;left:1058.5px;top:329.7px;width:1.0px;height:30.30000000000001px;background:#f0f0f0;"></div>
<div style="position:absolute;left:498.5px;top:340.35px;width:9.0px;height:9.0px;background:#fff;border:1px solid #dcdcdc;border-radius:1px;"></div>
<div style="position:absolute;left:519.5px;top:339.85px;width:73px;height:12px;overflow:hidden;"><div style="line-height:12px;font-size:8px;color:#444;white-space:nowrap;transform:scaleX(0.85);transform-origin:0 50%;-webkit-text-stroke:0.12px currentColor;">Acuity Brands Lighting</div></div>
<div style="position:absolute;left:598px;top:339.85px;width:59px;height:12px;overflow:hidden;"><div style="line-height:12px;font-size:8px;color:#444;white-space:nowrap;transform:scaleX(0.85);transform-origin:0 50%;-webkit-text-stroke:0.12px currentColor;">Missy Metzinger</div></div>
<div style="position:absolute;left:662.5px;top:338.85px;width:18.5px;height:12.0px;background:#e6f0fc;border-radius:2px;"></div>
<div style="position:absolute;left:665px;top:340.59px;height:9.52px;line-height:9.52px;font-size:6.8px;color:#4a86d2;white-space:nowrap;">采购</div>
<div style="position:absolute;left:683.5px;top:339.85px;width:61.5px;height:12px;overflow:hidden;"><div style="line-height:12px;font-size:8px;color:#444;white-space:nowrap;transform:scaleX(0.85);transform-origin:0 50%;-webkit-text-stroke:0.12px currentColor;">Buyer Planner</div></div>
<div style="position:absolute;left:751px;top:343.85px;width:3px;height:3.0px;background:#2fb37a;border-radius:50%;"></div>
<div style="position:absolute;left:757px;top:339.85px;width:140px;height:12px;overflow:hidden;"><div style="line-height:12px;font-size:8px;color:#444;white-space:nowrap;transform:scaleX(0.85);transform-origin:0 50%;-webkit-text-stroke:0.12px currentColor;">missy.metzinger@acuitybrands.com</div></div>
<svg style="position:absolute;left:869.31328125px;top:341.05px" width="7" height="8" viewBox="0 0 7 8"><rect x="0.6" y="1.6" width="4.6" height="5.8" rx="1" fill="none" stroke="#3d95f0" stroke-width="1.1"/><path d="M2.2 0.6H6.3V5.8" fill="none" stroke="#3d95f0" stroke-width="1.1"/></svg>
<div style="position:absolute;left:896px;top:340.35px;width:9px;height:9.0px;background:#2a6fc4;border-radius:1px;color:#fff;font-size:7px;line-height:9px;font-weight:bold;text-align:center;letter-spacing:-0.3px;">in</div>
<div style="position:absolute;left:907px;top:340.35px;width:9px;height:9.0px;background:#2b9cf0;border-radius:1px;"></div>
<svg style="position:absolute;left:908.5px;top:341.85px" width="6" height="6" viewBox="0 0 6 6"><path d="M0.3 4.6 Q2.6 5.2 4 3.6 Q5.2 2.2 5.3 1 L6 0.4 L5.2 0.6 Q4.4 -0.2 3.4 0.5 Q2.7 1.1 3 1.9 Q1.6 1.8 0.5 0.8 Q0 2.2 1.2 3 L0.6 3 Q1 4 2 4.2 Q1.2 4.7 0.3 4.6Z" fill="#fff"/></svg>
<div style="position:absolute;left:939.5px;top:334.05px;width:118px;height:12px;overflow:hidden;"><div style="line-height:12px;font-size:8px;color:#444;white-space:nowrap;transform:scaleX(0.85);transform-origin:0 50%;-webkit-text-stroke:0.12px currentColor;">go10eseavols@gmail.com</div></div>
<div style="position:absolute;left:939.5px;top:346.35px;width:118px;height:12px;overflow:hidden;"><div style="line-height:12px;font-size:8px;color:#444;white-space:nowrap;transform:scaleX(0.85);transform-origin:0 50%;-webkit-text-stroke:0.12px currentColor;">goeseavols@gmail.com</div></div>
<div style="position:absolute;left:491px;top:360px;width:699px;height:17.69999999999999px;background:#ffffff;border-bottom:1px solid #f0f0f0;"></div>
<div style="position:absolute;left:514px;top:360px;width:1px;height:17.69999999999999px;background:#f0f0f0;"></div>
<div style="position:absolute;left:593.5px;top:360px;width:1.0px;height:17.69999999999999px;background:#f0f0f0;"></div>
<div style="position:absolute;left:657.5px;top:360px;width:1.0px;height:17.69999999999999px;background:#f0f0f0;"></div>
<div style="position:absolute;left:745.5px;top:360px;width:1.0px;height:17.69999999999999px;background:#f0f0f0;"></div>
<div style="position:absolute;left:888px;top:360px;width:1px;height:17.69999999999999px;background:#f0f0f0;"></div>
<div style="position:absolute;left:934px;top:360px;width:1px;height:17.69999999999999px;background:#f0f0f0;"></div>
<div style="position:absolute;left:1058.5px;top:360px;width:1.0px;height:17.69999999999999px;background:#f0f0f0;"></div>
<div style="position:absolute;left:498.5px;top:364.35px;width:9.0px;height:9.0px;background:#fff;border:1px solid #dcdcdc;border-radius:1px;"></div>
<div style="position:absolute;left:519.5px;top:363.85px;width:73px;height:12px;overflow:hidden;"><div style="line-height:12px;font-size:8px;color:#444;white-space:nowrap;transform:scaleX(0.85);transform-origin:0 50%;-webkit-text-stroke:0.12px currentColor;">Acuity Brands</div></div>
<div style="position:absolute;left:598px;top:363.85px;width:59px;height:12px;overflow:hidden;"><div style="line-height:12px;font-size:8px;color:#444;white-space:nowrap;transform:scaleX(0.85);transform-origin:0 50%;-webkit-text-stroke:0.12px currentColor;">Shannon Taylor</div></div>
<div style="position:absolute;left:662.5px;top:362.85px;width:18.5px;height:12.0px;background:#e6f0fc;border-radius:2px;"></div>
<div style="position:absolute;left:665px;top:364.59px;height:9.52px;line-height:9.52px;font-size:6.8px;color:#4a86d2;white-space:nowrap;">采购</div>
<div style="position:absolute;left:683.5px;top:363.85px;width:61.5px;height:12px;overflow:hidden;"><div style="line-height:12px;font-size:8px;color:#444;white-space:nowrap;transform:scaleX(0.85);transform-origin:0 50%;-webkit-text-stroke:0.12px currentColor;">Buyer/Planner</div></div>
<div style="position:absolute;left:751px;top:367.85px;width:3px;height:3.0px;background:#2fb37a;border-radius:50%;"></div>
<div style="position:absolute;left:757px;top:363.85px;width:140px;height:12px;overflow:hidden;"><div style="line-height:12px;font-size:8px;color:#444;white-space:nowrap;transform:scaleX(0.85);transform-origin:0 50%;-webkit-text-stroke:0.12px currentColor;">shannon.taylor@acuitybrands.com</div></div>
<svg style="position:absolute;left:865.30234375px;top:365.05px" width="7" height="8" viewBox="0 0 7 8"><rect x="0.6" y="1.6" width="4.6" height="5.8" rx="1" fill="none" stroke="#3d95f0" stroke-width="1.1"/><path d="M2.2 0.6H6.3V5.8" fill="none" stroke="#3d95f0" stroke-width="1.1"/></svg>
<div style="position:absolute;left:896px;top:364.35px;width:9px;height:9.0px;background:#2a6fc4;border-radius:1px;color:#fff;font-size:7px;line-height:9px;font-weight:bold;text-align:center;letter-spacing:-0.3px;">in</div>
<div style="position:absolute;left:939.5px;top:363.85px;width:118px;height:12px;overflow:hidden;"><div style="line-height:12px;font-size:8px;color:#444;white-space:nowrap;transform:scaleX(0.85);transform-origin:0 50%;-webkit-text-stroke:0.12px currentColor;">shay2taylor@gmail.com</div></div>
<div style="position:absolute;left:491px;top:377.7px;width:699px;height:18.100000000000023px;background:#f7f7f7;border-bottom:1px solid #f0f0f0;"></div>
<div style="position:absolute;left:514px;top:377.7px;width:1px;height:18.100000000000023px;background:#f0f0f0;"></div>
<div style="position:absolute;left:593.5px;top:377.7px;width:1.0px;height:18.100000000000023px;background:#f0f0f0;"></div>
<div style="position:absolute;left:657.5px;top:377.7px;width:1.0px;height:18.100000000000023px;background:#f0f0f0;"></div>
<div style="position:absolute;left:745.5px;top:377.7px;width:1.0px;height:18.100000000000023px;background:#f0f0f0;"></div>
<div style="position:absolute;left:888px;top:377.7px;width:1px;height:18.100000000000023px;background:#f0f0f0;"></div>
<div style="position:absolute;left:934px;top:377.7px;width:1px;height:18.100000000000023px;background:#f0f0f0;"></div>
<div style="position:absolute;left:1058.5px;top:377.7px;width:1.0px;height:18.100000000000023px;background:#f0f0f0;"></div>
<div style="position:absolute;left:498.5px;top:382.25px;width:9.0px;height:9.0px;background:#fff;border:1px solid #dcdcdc;border-radius:1px;"></div>
<div style="position:absolute;left:519.5px;top:381.75px;width:73px;height:12px;overflow:hidden;"><div style="line-height:12px;font-size:8px;color:#444;white-space:nowrap;transform:scaleX(0.85);transform-origin:0 50%;-webkit-text-stroke:0.12px currentColor;">Acuity Brands</div></div>
<div style="position:absolute;left:598px;top:381.75px;width:59px;height:12px;overflow:hidden;"><div style="line-height:12px;font-size:8px;color:#444;white-space:nowrap;transform:scaleX(0.85);transform-origin:0 50%;-webkit-text-stroke:0.12px currentColor;">Donnie Mills</div></div>
<div style="position:absolute;left:662.5px;top:380.75px;width:18.5px;height:12.0px;background:#e6f0fc;border-radius:2px;"></div>
<div style="position:absolute;left:665px;top:382.49px;height:9.52px;line-height:9.52px;font-size:6.8px;color:#4a86d2;white-space:nowrap;">采购</div>
<div style="position:absolute;left:683.5px;top:381.75px;width:61.5px;height:12px;overflow:hidden;"><div style="line-height:12px;font-size:8px;color:#444;white-space:nowrap;transform:scaleX(0.85);transform-origin:0 50%;-webkit-text-stroke:0.12px currentColor;">New Product Sourcing</div></div>
<div style="position:absolute;left:751px;top:385.75px;width:3px;height:3.0px;background:#2fb37a;border-radius:50%;"></div>
<div style="position:absolute;left:757px;top:381.75px;width:140px;height:12px;overflow:hidden;"><div style="line-height:12px;font-size:8px;color:#444;white-space:nowrap;transform:scaleX(0.85);transform-origin:0 50%;-webkit-text-stroke:0.12px currentColor;">donnie.mills@acuitybrands.com</div></div>
<svg style="position:absolute;left:856.603125px;top:382.95px" width="7" height="8" viewBox="0 0 7 8"><rect x="0.6" y="1.6" width="4.6" height="5.8" rx="1" fill="none" stroke="#3d95f0" stroke-width="1.1"/><path d="M2.2 0.6H6.3V5.8" fill="none" stroke="#3d95f0" stroke-width="1.1"/></svg>
<div style="position:absolute;left:896px;top:382.25px;width:9px;height:9.0px;background:#2a6fc4;border-radius:1px;color:#fff;font-size:7px;line-height:9px;font-weight:bold;text-align:center;letter-spacing:-0.3px;">in</div>
<div style="position:absolute;left:907px;top:382.25px;width:9px;height:9.0px;background:#2b9cf0;border-radius:1px;"></div>
<svg style="position:absolute;left:908.5px;top:383.75px" width="6" height="6" viewBox="0 0 6 6"><path d="M0.3 4.6 Q2.6 5.2 4 3.6 Q5.2 2.2 5.3 1 L6 0.4 L5.2 0.6 Q4.4 -0.2 3.4 0.5 Q2.7 1.1 3 1.9 Q1.6 1.8 0.5 0.8 Q0 2.2 1.2 3 L0.6 3 Q1 4 2 4.2 Q1.2 4.7 0.3 4.6Z" fill="#fff"/></svg>
<div style="position:absolute;left:939.5px;top:381.75px;width:118px;height:12px;overflow:hidden;"><div style="line-height:12px;font-size:8px;color:#444;white-space:nowrap;transform:scaleX(0.85);transform-origin:0 50%;-webkit-text-stroke:0.12px currentColor;">drmills73@gmail.com</div></div>
<div style="position:absolute;left:491px;top:395.8px;width:699px;height:18.19999999999999px;background:#ffffff;border-bottom:1px solid #f0f0f0;"></div>
<div style="position:absolute;left:514px;top:395.8px;width:1px;height:18.19999999999999px;background:#f0f0f0;"></div>
<div style="position:absolute;left:593.5px;top:395.8px;width:1.0px;height:18.19999999999999px;background:#f0f0f0;"></div>
<div style="position:absolute;left:657.5px;top:395.8px;width:1.0px;height:18.19999999999999px;background:#f0f0f0;"></div>
<div style="position:absolute;left:745.5px;top:395.8px;width:1.0px;height:18.19999999999999px;background:#f0f0f0;"></div>
<div style="position:absolute;left:888px;top:395.8px;width:1px;height:18.19999999999999px;background:#f0f0f0;"></div>
<div style="position:absolute;left:934px;top:395.8px;width:1px;height:18.19999999999999px;background:#f0f0f0;"></div>
<div style="position:absolute;left:1058.5px;top:395.8px;width:1.0px;height:18.19999999999999px;background:#f0f0f0;"></div>
<div style="position:absolute;left:498.5px;top:400.4px;width:9.0px;height:9.0px;background:#fff;border:1px solid #dcdcdc;border-radius:1px;"></div>
<div style="position:absolute;left:519.5px;top:399.90px;width:73px;height:12px;overflow:hidden;"><div style="line-height:12px;font-size:8px;color:#444;white-space:nowrap;transform:scaleX(0.85);transform-origin:0 50%;-webkit-text-stroke:0.12px currentColor;">Acuity Brands</div></div>
<div style="position:absolute;left:598px;top:399.90px;width:59px;height:12px;overflow:hidden;"><div style="line-height:12px;font-size:8px;color:#444;white-space:nowrap;transform:scaleX(0.85);transform-origin:0 50%;-webkit-text-stroke:0.12px currentColor;">Mary Marshall</div></div>
<div style="position:absolute;left:662.5px;top:398.9px;width:18.5px;height:12.0px;background:#e6f0fc;border-radius:2px;"></div>
<div style="position:absolute;left:665px;top:400.64px;height:9.52px;line-height:9.52px;font-size:6.8px;color:#4a86d2;white-space:nowrap;">采购</div>
<div style="position:absolute;left:683.5px;top:399.90px;width:61.5px;height:12px;overflow:hidden;"><div style="line-height:12px;font-size:8px;color:#444;white-space:nowrap;transform:scaleX(0.85);transform-origin:0 50%;-webkit-text-stroke:0.12px currentColor;">Sourcing Manager - </div></div>
<div style="position:absolute;left:751px;top:403.9px;width:3px;height:3.0px;background:#2fb37a;border-radius:50%;"></div>
<div style="position:absolute;left:757px;top:399.90px;width:140px;height:12px;overflow:hidden;"><div style="line-height:12px;font-size:8px;color:#444;white-space:nowrap;transform:scaleX(0.85);transform-origin:0 50%;-webkit-text-stroke:0.12px currentColor;">mary.marshall@acuitybrands.com</div></div>
<svg style="position:absolute;left:862.88515625px;top:401.09999999999997px" width="7" height="8" viewBox="0 0 7 8"><rect x="0.6" y="1.6" width="4.6" height="5.8" rx="1" fill="none" stroke="#3d95f0" stroke-width="1.1"/><path d="M2.2 0.6H6.3V5.8" fill="none" stroke="#3d95f0" stroke-width="1.1"/></svg>
<div style="position:absolute;left:896px;top:400.4px;width:9px;height:9.0px;background:#2a6fc4;border-radius:1px;color:#fff;font-size:7px;line-height:9px;font-weight:bold;text-align:center;letter-spacing:-0.3px;">in</div>
<div style="position:absolute;left:491px;top:414px;width:699px;height:17.600000000000023px;background:#f7f7f7;border-bottom:1px solid #f0f0f0;"></div>
<div style="position:absolute;left:514px;top:414px;width:1px;height:17.600000000000023px;background:#f0f0f0;"></div>
<div style="position:absolute;left:593.5px;top:414px;width:1.0px;height:17.600000000000023px;background:#f0f0f0;"></div>
<div style="position:absolute;left:657.5px;top:414px;width:1.0px;height:17.600000000000023px;background:#f0f0f0;"></div>
<div style="position:absolute;left:745.5px;top:414px;width:1.0px;height:17.600000000000023px;background:#f0f0f0;"></div>
<div style="position:absolute;left:888px;top:414px;width:1px;height:17.600000000000023px;background:#f0f0f0;"></div>
<div style="position:absolute;left:934px;top:414px;width:1px;height:17.600000000000023px;background:#f0f0f0;"></div>
<div style="position:absolute;left:1058.5px;top:414px;width:1.0px;height:17.600000000000023px;background:#f0f0f0;"></div>
<div style="position:absolute;left:498.5px;top:418.3px;width:9.0px;height:9.0px;background:#fff;border:1px solid #dcdcdc;border-radius:1px;"></div>
<div style="position:absolute;left:519.5px;top:417.80px;width:73px;height:12px;overflow:hidden;"><div style="line-height:12px;font-size:8px;color:#444;white-space:nowrap;transform:scaleX(0.85);transform-origin:0 50%;-webkit-text-stroke:0.12px currentColor;">Acuity Brands Lighting</div></div>
<div style="position:absolute;left:598px;top:417.80px;width:59px;height:12px;overflow:hidden;"><div style="line-height:12px;font-size:8px;color:#444;white-space:nowrap;transform:scaleX(0.85);transform-origin:0 50%;-webkit-text-stroke:0.12px currentColor;">Steve Dupree</div></div>
<div style="position:absolute;left:662.5px;top:416.8px;width:18.5px;height:12.0px;background:#e6f0fc;border-radius:2px;"></div>
<div style="position:absolute;left:665px;top:418.54px;height:9.52px;line-height:9.52px;font-size:6.8px;color:#4a86d2;white-space:nowrap;">采购</div>
<div style="position:absolute;left:683.5px;top:417.80px;width:61.5px;height:12px;overflow:hidden;"><div style="line-height:12px;font-size:8px;color:#444;white-space:nowrap;transform:scaleX(0.85);transform-origin:0 50%;-webkit-text-stroke:0.12px currentColor;">planner / buyer / procurement</div></div>
<div style="position:absolute;left:751px;top:421.8px;width:3px;height:3.0px;background:#2fb37a;border-radius:50%;"></div>
<div style="position:absolute;left:757px;top:417.80px;width:140px;height:12px;overflow:hidden;"><div style="line-height:12px;font-size:8px;color:#444;white-space:nowrap;transform:scaleX(0.85);transform-origin:0 50%;-webkit-text-stroke:0.12px currentColor;">steve.dupree@acuitybrands.com</div></div>
<svg style="position:absolute;left:860.01640625px;top:419.0px" width="7" height="8" viewBox="0 0 7 8"><rect x="0.6" y="1.6" width="4.6" height="5.8" rx="1" fill="none" stroke="#3d95f0" stroke-width="1.1"/><path d="M2.2 0.6H6.3V5.8" fill="none" stroke="#3d95f0" stroke-width="1.1"/></svg>
<div style="position:absolute;left:896px;top:418.3px;width:9px;height:9.0px;background:#2a6fc4;border-radius:1px;color:#fff;font-size:7px;line-height:9px;font-weight:bold;text-align:center;letter-spacing:-0.3px;">in</div>
<div style="position:absolute;left:939.5px;top:417.80px;width:118px;height:12px;overflow:hidden;"><div style="line-height:12px;font-size:8px;color:#444;white-space:nowrap;transform:scaleX(0.85);transform-origin:0 50%;-webkit-text-stroke:0.12px currentColor;">sdupree46@gmail.com</div></div>
<div style="position:absolute;left:491px;top:431.6px;width:699px;height:16.799999999999955px;background:#ffffff;border-bottom:1px solid #f0f0f0;"></div>
<div style="position:absolute;left:514px;top:431.6px;width:1px;height:16.799999999999955px;background:#f0f0f0;"></div>
<div style="position:absolute;left:593.5px;top:431.6px;width:1.0px;height:16.799999999999955px;background:#f0f0f0;"></div>
<div style="position:absolute;left:657.5px;top:431.6px;width:1.0px;height:16.799999999999955px;background:#f0f0f0;"></div>
<div style="position:absolute;left:745.5px;top:431.6px;width:1.0px;height:16.799999999999955px;background:#f0f0f0;"></div>
<div style="position:absolute;left:888px;top:431.6px;width:1px;height:16.799999999999955px;background:#f0f0f0;"></div>
<div style="position:absolute;left:934px;top:431.6px;width:1px;height:16.799999999999955px;background:#f0f0f0;"></div>
<div style="position:absolute;left:1058.5px;top:431.6px;width:1.0px;height:16.799999999999955px;background:#f0f0f0;"></div>
<div style="position:absolute;left:498.5px;top:435.5px;width:9.0px;height:9.0px;background:#fff;border:1px solid #dcdcdc;border-radius:1px;"></div>
<div style="position:absolute;left:519.5px;top:435.00px;width:73px;height:12px;overflow:hidden;"><div style="line-height:12px;font-size:8px;color:#444;white-space:nowrap;transform:scaleX(0.85);transform-origin:0 50%;-webkit-text-stroke:0.12px currentColor;">Acuity Brands Lighting</div></div>
<div style="position:absolute;left:598px;top:435.00px;width:59px;height:12px;overflow:hidden;"><div style="line-height:12px;font-size:8px;color:#444;white-space:nowrap;transform:scaleX(0.85);transform-origin:0 50%;-webkit-text-stroke:0.12px currentColor;">Debbie Cook</div></div>
<div style="position:absolute;left:662.5px;top:434.0px;width:18.5px;height:12.0px;background:#e6f0fc;border-radius:2px;"></div>
<div style="position:absolute;left:665px;top:435.74px;height:9.52px;line-height:9.52px;font-size:6.8px;color:#4a86d2;white-space:nowrap;">采购</div>
<div style="position:absolute;left:683.5px;top:435.00px;width:61.5px;height:12px;overflow:hidden;"><div style="line-height:12px;font-size:8px;color:#444;white-space:nowrap;transform:scaleX(0.85);transform-origin:0 50%;-webkit-text-stroke:0.12px currentColor;">Sourcing Specialist</div></div>
<div style="position:absolute;left:751px;top:439.0px;width:3px;height:3.0px;background:#2fb37a;border-radius:50%;"></div>
<div style="position:absolute;left:757px;top:435.00px;width:140px;height:12px;overflow:hidden;"><div style="line-height:12px;font-size:8px;color:#444;white-space:nowrap;transform:scaleX(0.85);transform-origin:0 50%;-webkit-text-stroke:0.12px currentColor;">debbie.cook@acuitybrands.com</div></div>
<svg style="position:absolute;left:857.3734375px;top:436.2px" width="7" height="8" viewBox="0 0 7 8"><rect x="0.6" y="1.6" width="4.6" height="5.8" rx="1" fill="none" stroke="#3d95f0" stroke-width="1.1"/><path d="M2.2 0.6H6.3V5.8" fill="none" stroke="#3d95f0" stroke-width="1.1"/></svg>
<div style="position:absolute;left:896px;top:435.5px;width:9px;height:9.0px;background:#2a6fc4;border-radius:1px;color:#fff;font-size:7px;line-height:9px;font-weight:bold;text-align:center;letter-spacing:-0.3px;">in</div>
<div style="position:absolute;left:491px;top:448.4px;width:699px;height:17.600000000000023px;background:#f7f7f7;border-bottom:1px solid #f0f0f0;"></div>
<div style="position:absolute;left:514px;top:448.4px;width:1px;height:17.600000000000023px;background:#f0f0f0;"></div>
<div style="position:absolute;left:593.5px;top:448.4px;width:1.0px;height:17.600000000000023px;background:#f0f0f0;"></div>
<div style="position:absolute;left:657.5px;top:448.4px;width:1.0px;height:17.600000000000023px;background:#f0f0f0;"></div>
<div style="position:absolute;left:745.5px;top:448.4px;width:1.0px;height:17.600000000000023px;background:#f0f0f0;"></div>
<div style="position:absolute;left:888px;top:448.4px;width:1px;height:17.600000000000023px;background:#f0f0f0;"></div>
<div style="position:absolute;left:934px;top:448.4px;width:1px;height:17.600000000000023px;background:#f0f0f0;"></div>
<div style="position:absolute;left:1058.5px;top:448.4px;width:1.0px;height:17.600000000000023px;background:#f0f0f0;"></div>
<div style="position:absolute;left:498.5px;top:452.7px;width:9.0px;height:9.0px;background:#fff;border:1px solid #dcdcdc;border-radius:1px;"></div>
<div style="position:absolute;left:519.5px;top:452.20px;width:73px;height:12px;overflow:hidden;"><div style="line-height:12px;font-size:8px;color:#444;white-space:nowrap;transform:scaleX(0.85);transform-origin:0 50%;-webkit-text-stroke:0.12px currentColor;">Acuity Brands Lighting</div></div>
<div style="position:absolute;left:598px;top:452.20px;width:59px;height:12px;overflow:hidden;"><div style="line-height:12px;font-size:8px;color:#444;white-space:nowrap;transform:scaleX(0.85);transform-origin:0 50%;-webkit-text-stroke:0.12px currentColor;">Dan Williams</div></div>
<div style="position:absolute;left:662.5px;top:451.2px;width:18.5px;height:12.0px;background:#e6f0fc;border-radius:2px;"></div>
<div style="position:absolute;left:665px;top:452.94px;height:9.52px;line-height:9.52px;font-size:6.8px;color:#4a86d2;white-space:nowrap;">采购</div>
<div style="position:absolute;left:683.5px;top:452.20px;width:61.5px;height:12px;overflow:hidden;"><div style="line-height:12px;font-size:8px;color:#444;white-space:nowrap;transform:scaleX(0.85);transform-origin:0 50%;-webkit-text-stroke:0.12px currentColor;">Sourcing Manager</div></div>
<div style="position:absolute;left:751px;top:456.2px;width:3px;height:3.0px;background:#2fb37a;border-radius:50%;"></div>
<div style="position:absolute;left:757px;top:452.20px;width:140px;height:12px;overflow:hidden;"><div style="line-height:12px;font-size:8px;color:#444;white-space:nowrap;transform:scaleX(0.85);transform-origin:0 50%;-webkit-text-stroke:0.12px currentColor;">daniel.williams2@acuitybrands.com</div></div>
<svg style="position:absolute;left:868.3171875px;top:453.4px" width="7" height="8" viewBox="0 0 7 8"><rect x="0.6" y="1.6" width="4.6" height="5.8" rx="1" fill="none" stroke="#3d95f0" stroke-width="1.1"/><path d="M2.2 0.6H6.3V5.8" fill="none" stroke="#3d95f0" stroke-width="1.1"/></svg>
<div style="position:absolute;left:896px;top:452.7px;width:9px;height:9.0px;background:#2a6fc4;border-radius:1px;color:#fff;font-size:7px;line-height:9px;font-weight:bold;text-align:center;letter-spacing:-0.3px;">in</div>
<div style="position:absolute;left:1188.5px;top:143px;width:1.5px;height:67px;background:#c8c8c8;"></div>
<div style="position:absolute;left:8.5px;top:195.3px;width:489.0px;height:282.4px;background:#f4f5f9;border-radius:14px 8px 8px 14px;box-shadow:0 0 0 0.5px #e9ebf0, 1px 2px 0 0.5px #e6e6e6, 2px 3px 3px rgba(0,0,0,0.05);"></div>
<div style="position:absolute;left:29px;top:200px;width:464px;height:277.7px;background:#edf0f7;"></div>
<div style="position:absolute;left:13px;top:200px;width:16px;height:273px;background:#fff;"></div>
<svg style="position:absolute;left:17.5px;top:212.3px" width="7.5" height="8" viewBox="0 0 7.5 8"><path d="M0.7 3.6 L3.5 0.8 L6.3 3.6 V7.3 H0.7Z" fill="none" stroke="#888" stroke-width="0.8"/><rect x="2.6" y="4.6" width="1.8" height="2.7" fill="#888"/></svg>
<svg style="position:absolute;left:17.5px;top:233.5px" width="7.5" height="8" viewBox="0 0 7.5 8"><rect x="0.8" y="1" width="5" height="6.3" rx="1.5" fill="none" stroke="#888" stroke-width="0.8"/><path d="M2 3.2 H4.8 M2 5 H4.2" stroke="#888" stroke-width="0.7"/><path d="M5 0.3 L6.6 1.4 L5 2.5" fill="none" stroke="#6a7fd0" stroke-width="0.6"/></svg>
<svg style="position:absolute;left:17.5px;top:254.7px" width="7.5" height="8" viewBox="0 0 7.5 8"><path d="M1 7.2 L2 0.8 L6.6 6 Z" fill="none" stroke="#888" stroke-width="0.8"/></svg>
<svg style="position:absolute;left:17.5px;top:275.4px" width="7.5" height="8" viewBox="0 0 7.5 8"><rect x="1" y="2" width="4" height="5.5" fill="#999"/><rect x="3.5" y="0.8" width="3" height="6.7" fill="#aaa"/></svg>
<svg style="position:absolute;left:17.5px;top:295.3px" width="7.5" height="8" viewBox="0 0 7.5 8"><rect x="0.8" y="0.7" width="5.5" height="6.7" rx="0.6" fill="none" stroke="#888" stroke-width="0.8"/><rect x="2.2" y="3" width="2.6" height="2.6" fill="none" stroke="#888" stroke-width="0.6"/></svg>
<svg style="position:absolute;left:17.5px;top:314.7px" width="7.5" height="8" viewBox="0 0 7.5 8"><rect x="0.8" y="0.7" width="5.5" height="6.5" rx="0.6" fill="none" stroke="#3a8de8" stroke-width="0.9"/><path d="M0.8 2.8 H6.3" stroke="#3a8de8" stroke-width="0.8"/></svg>
<div style="position:absolute;left:36px;top:206.5px;width:456px;height:75.0px;background:#fff;border-radius:3px;"></div>
<div style="position:absolute;left:45.3px;top:214.43px;height:5.74px;line-height:5.74px;font-size:4.1px;color:#3a8de8;white-space:nowrap;">邮件报告</div>
<div style="position:absolute;left:71.6px;top:214.43px;height:5.74px;line-height:5.74px;font-size:4.1px;color:#444;white-space:nowrap;">收件人报告</div>
<div style="position:absolute;left:45.3px;top:226.4px;width:16.200000000000003px;height:1.4000000000000057px;background:#3a8de8;"></div>
<div style="position:absolute;left:36px;top:228px;width:456px;height:1px;background:#eef0f4;"></div>
<div style="position:absolute;left:380.5px;top:212.3px;width:61.0px;height:10.299999999999983px;background:#fff;border:1px solid #e9e9e9;border-radius:2px;"></div>
<div style="position:absolute;left:384px;top:214.98px;height:5.04px;line-height:5.04px;font-size:3.6px;color:#888;white-space:nowrap;">请选择时间</div>
<svg style="position:absolute;left:434px;top:215px" width="5" height="5" viewBox="0 0 5 5"><circle cx="2.5" cy="2.5" r="2" fill="none" stroke="#999" stroke-width="0.6"/></svg>
<div style="position:absolute;left:445.3px;top:212.3px;width:40.30000000000001px;height:10.299999999999983px;background:#fff;border:1px solid #e9e9e9;border-radius:2px;"></div>
<div style="position:absolute;left:448.5px;top:214.98px;height:5.04px;line-height:5.04px;font-size:3.6px;color:#444;white-space:nowrap;">全部账号</div>
<svg style="position:absolute;left:479px;top:216px" width="4" height="3" viewBox="0 0 4 3"><path d="M0.3 0.5 L2 2.2 L3.7 0.5" fill="none" stroke="#aaa" stroke-width="0.5"/></svg>
<svg style="position:absolute;left:84px;top:245.3px" width="7.5" height="9" viewBox="0 0 7.5 9"><circle cx="2.5" cy="2.5" r="1.8" fill="none" stroke="#777" stroke-width="0.7" stroke-dasharray="1.5,1"/><path d="M2.5 2.5 L6.8 5.3 L4.8 5.6 L4.3 8.5 Z" fill="none" stroke="#666" stroke-width="0.8"/></svg>
<div style="position:absolute;left:94.7px;top:243.40px;height:14.00px;line-height:14.00px;font-size:10px;color:#62aef0;white-space:nowrap;transform:scaleX(0.67);transform-origin:0 50%;">18893</div>
<div style="position:absolute;left:85px;top:259.57px;height:5.46px;line-height:5.46px;font-size:3.9px;color:#777;white-space:nowrap;">点击</div>
<svg style="position:absolute;left:195px;top:245.3px" width="7.5" height="9" viewBox="0 0 7.5 9"><path d="M0.5 1.2 H3 L3.8 2.2 H7 V7.5 H0.5Z" fill="none" stroke="#777" stroke-width="0.8"/><path d="M0.5 3.2 H7" stroke="#777" stroke-width="0.6"/></svg>
<div style="position:absolute;left:205.7px;top:243.40px;height:14.00px;line-height:14.00px;font-size:10px;color:#62aef0;white-space:nowrap;transform:scaleX(0.67);transform-origin:0 50%;">28069</div>
<div style="position:absolute;left:196px;top:259.57px;height:5.46px;line-height:5.46px;font-size:3.9px;color:#777;white-space:nowrap;">打开</div>
<svg style="position:absolute;left:306px;top:245.3px" width="7.5" height="9" viewBox="0 0 7.5 9"><path d="M0.5 1.2 H3 L3.8 2.2 H7 V7.5 H0.5Z" fill="none" stroke="#777" stroke-width="0.8"/><path d="M0.5 3.2 H7" stroke="#777" stroke-width="0.6"/></svg>
<div style="position:absolute;left:316.7px;top:243.40px;height:14.00px;line-height:14.00px;font-size:10px;color:#62aef0;white-space:nowrap;transform:scaleX(0.67);transform-origin:0 50%;">86057</div>
<div style="position:absolute;left:307px;top:259.57px;height:5.46px;line-height:5.46px;font-size:3.9px;color:#777;white-space:nowrap;">未打开</div>
<svg style="position:absolute;left:417.5px;top:245.3px" width="7.5" height="9" viewBox="0 0 7.5 9"><rect x="0.5" y="1" width="6.5" height="7" rx="0.7" fill="none" stroke="#777" stroke-width="0.8"/><path d="M0.8 1.8 L3.75 4.5 L6.7 1.8" fill="none" stroke="#777" stroke-width="0.7"/></svg>
<div style="position:absolute;left:428.2px;top:243.40px;height:14.00px;line-height:14.00px;font-size:10px;color:#62aef0;white-space:nowrap;transform:scaleX(0.67);transform-origin:0 50%;">7017</div>
<div style="position:absolute;left:418.5px;top:259.57px;height:5.46px;line-height:5.46px;font-size:3.9px;color:#777;white-space:nowrap;">退信</div>
<div style="position:absolute;left:152px;top:241.5px;width:0.8000000000000114px;height:27.0px;background:#f0f0f0;"></div>
<div style="position:absolute;left:263px;top:241.5px;width:0.8000000000000114px;height:27.0px;background:#f0f0f0;"></div>
<div style="position:absolute;left:374.5px;top:241.5px;width:0.8000000000000114px;height:27.0px;background:#f0f0f0;"></div>
<div style="position:absolute;left:35.8px;top:287px;width:110.2px;height:173.5px;background:#fff;border-radius:3px;"></div>
<div style="position:absolute;left:41.5px;top:294.22px;height:7.56px;line-height:7.56px;font-size:5.4px;color:#333;white-space:nowrap;transform:scaleX(0.75);transform-origin:0 50%;font-weight:bold;">区域分布</div>
<div style="position:absolute;left:41.5px;top:307.8px;width:98.80000000000001px;height:1.0px;background:#eef0f4;"></div>
<div style="position:absolute;left:150px;top:287px;width:168.5px;height:173.5px;background:#fff;border-radius:3px;"></div>
<div style="position:absolute;left:155.7px;top:294.22px;height:7.56px;line-height:7.56px;font-size:5.4px;color:#333;white-space:nowrap;transform:scaleX(0.75);transform-origin:0 50%;font-weight:bold;">发送报告</div>
<div style="position:absolute;left:155.7px;top:307.8px;width:157.10000000000002px;height:1.0px;background:#eef0f4;"></div>
<div style="position:absolute;left:323px;top:287px;width:168.5px;height:173.5px;background:#fff;border-radius:3px;"></div>
<div style="position:absolute;left:328.7px;top:294.22px;height:7.56px;line-height:7.56px;font-size:5.4px;color:#333;white-space:nowrap;transform:scaleX(0.75);transform-origin:0 50%;font-weight:bold;">效果报告</div>
<div style="position:absolute;left:328.7px;top:307.8px;width:157.10000000000002px;height:1.0px;background:#eef0f4;"></div>
<svg style="position:absolute;left:150px;top:286px" width="169" height="175" viewBox="150 286 169 175"><line x1="158" y1="337" x2="308" y2="337" stroke="#efefef" stroke-width="0.6" stroke-dasharray="2,2"/><line x1="158" y1="353" x2="308" y2="353" stroke="#efefef" stroke-width="0.6" stroke-dasharray="2,2"/><line x1="158" y1="369.4" x2="308" y2="369.4" stroke="#efefef" stroke-width="0.6" stroke-dasharray="2,2"/><line x1="158" y1="385" x2="308" y2="385" stroke="#efefef" stroke-width="0.6" stroke-dasharray="2,2"/><line x1="158" y1="401.6" x2="308" y2="401.6" stroke="#efefef" stroke-width="0.6" stroke-dasharray="2,2"/><line x1="158" y1="417" x2="308" y2="417" stroke="#e3e3e3" stroke-width="0.7"/><line x1="240.3" y1="331" x2="240.3" y2="419" stroke="#dedede" stroke-width="0.7"/><polyline fill="none" stroke="#7fbf95" stroke-width="1.2" points="160.7,383.1 169.3,389.4 181.5,383.1 201.9,391.4 214.8,367.8 226.6,391.4 239.1,383.1 255,378 270.5,376 287,352.2 301,353"/><text x="160.0" y="426" font-size="3.6" fill="#777" text-anchor="middle">03-0</text><text x="160.0" y="433" font-size="3.6" fill="#777" text-anchor="middle">1</text><text x="170.07" y="426" font-size="3.6" fill="#777" text-anchor="middle">03-0</text><text x="170.07" y="433" font-size="3.6" fill="#777" text-anchor="middle">2</text><text x="180.14" y="426" font-size="3.6" fill="#777" text-anchor="middle">03-0</text><text x="180.14" y="433" font-size="3.6" fill="#777" text-anchor="middle">3</text><text x="190.21" y="426" font-size="3.6" fill="#777" text-anchor="middle">03-0</text><text x="190.21" y="433" font-size="3.6" fill="#777" text-anchor="middle">4</text><text x="200.28" y="426" font-size="3.6" fill="#777" text-anchor="middle">03-0</text><text x="200.28" y="433" font-size="3.6" fill="#777" text-anchor="middle">5</text><text x="210.35" y="426" font-size="3.6" fill="#777" text-anchor="middle">03-0</text><text x="210.35" y="433" font-size="3.6" fill="#777" text-anchor="middle">6</text><text x="220.42000000000002" y="426" font-size="3.6" fill="#777" text-anchor="middle">03-0</text><text x="220.42000000000002" y="433" font-size="3.6" fill="#777" text-anchor="middle">7</text><text x="230.49" y="426" font-size="3.6" fill="#777" text-anchor="middle">03-0</text><text x="230.49" y="433" font-size="3.6" fill="#777" text-anchor="middle">8</text><text x="240.56" y="426" font-size="3.6" fill="#777" text-anchor="middle">03-0</text><text x="240.56" y="433" font-size="3.6" fill="#777" text-anchor="middle">9</text><text x="250.63" y="426" font-size="3.6" fill="#777" text-anchor="middle">03-0</text><text x="250.63" y="433" font-size="3.6" fill="#777" text-anchor="middle">1</text><text x="260.7" y="426" font-size="3.6" fill="#777" text-anchor="middle">03-0</text><text x="260.7" y="433" font-size="3.6" fill="#777" text-anchor="middle">2</text><text x="270.77" y="426" font-size="3.6" fill="#777" text-anchor="middle">03-0</text><text x="270.77" y="433" font-size="3.6" fill="#777" text-anchor="middle">3</text><text x="280.84000000000003" y="426" font-size="3.6" fill="#777" text-anchor="middle">03-0</text><text x="280.84000000000003" y="433" font-size="3.6" fill="#777" text-anchor="middle">4</text><text x="290.90999999999997" y="426" font-size="3.6" fill="#777" text-anchor="middle">03-0</text><text x="290.90999999999997" y="433" font-size="3.6" fill="#777" text-anchor="middle">5</text><text x="300.98" y="426" font-size="3.6" fill="#777" text-anchor="middle">03-0</text><text x="300.98" y="433" font-size="3.6" fill="#777" text-anchor="middle">6</text></svg>
<div style="position:absolute;left:237px;top:374px;width:34.5px;height:23.5px;background:#fff;border:1px solid #ececec;border-radius:2px;box-shadow:0 1px 2px rgba(0,0,0,0.08);"></div>
<div style="position:absolute;left:240px;top:377.84px;height:5.32px;line-height:5.32px;font-size:3.8px;color:#555;white-space:nowrap;">2022-03-12 12:30</div>
<div style="position:absolute;left:240px;top:387.5px;width:2px;height:2.0px;background:#7fbf95;border-radius:50%;"></div>
<div style="position:absolute;left:244px;top:385.84px;height:5.32px;line-height:5.32px;font-size:3.8px;color:#555;white-space:nowrap;">已发送: 42</div>
<svg style="position:absolute;left:323px;top:286px" width="169" height="175" viewBox="323 286 169 175"><line x1="328" y1="331" x2="486" y2="331" stroke="#f0f0f0" stroke-width="0.6" stroke-dasharray="2,2"/><line x1="328" y1="348" x2="486" y2="348" stroke="#f0f0f0" stroke-width="0.6" stroke-dasharray="2,2"/><line x1="328" y1="365" x2="486" y2="365" stroke="#f0f0f0" stroke-width="0.6" stroke-dasharray="2,2"/><line x1="328" y1="382" x2="486" y2="382" stroke="#f0f0f0" stroke-width="0.6" stroke-dasharray="2,2"/><line x1="328" y1="398.6" x2="486" y2="398.6" stroke="#f0f0f0" stroke-width="0.6" stroke-dasharray="2,2"/><line x1="328" y1="415.5" x2="486" y2="415.5" stroke="#f0f0f0" stroke-width="0.6" stroke-dasharray="2,2"/><rect x="328.00" y="402" width="6.3" height="30.00" fill="#5fd0cf"/><rect x="328.00" y="427" width="6.3" height="5.00" fill="#3d9af5"/><text x="331.15" y="442" font-size="3.6" fill="#777" text-anchor="middle">03-01</text><rect x="338.90" y="363.3" width="6.3" height="68.70" fill="#5fd0cf"/><rect x="338.90" y="399.8" width="6.3" height="32.20" fill="#3d9af5"/><text x="342.05" y="442" font-size="3.6" fill="#777" text-anchor="middle">03-01</text><rect x="349.80" y="345.2" width="6.3" height="86.80" fill="#5fd0cf"/><rect x="349.80" y="388.8" width="6.3" height="43.20" fill="#3d9af5"/><text x="352.95" y="442" font-size="3.6" fill="#777" text-anchor="middle">03-01</text><rect x="360.70" y="386" width="6.3" height="46.00" fill="#5fd0cf"/><rect x="360.70" y="412" width="6.3" height="20.00" fill="#3d9af5"/><text x="363.85" y="442" font-size="3.6" fill="#777" text-anchor="middle">03-01</text><rect x="371.60" y="386" width="6.3" height="46.00" fill="#5fd0cf"/><rect x="371.60" y="412" width="6.3" height="20.00" fill="#3d9af5"/><text x="374.75" y="442" font-size="3.6" fill="#777" text-anchor="middle">03-01</text><rect x="382.50" y="419" width="6.3" height="13.00" fill="#5fd0cf"/><rect x="382.50" y="423.8" width="6.3" height="8.20" fill="#3d9af5"/><text x="385.65" y="442" font-size="3.6" fill="#777" text-anchor="middle">03-01</text><rect x="393.40" y="392" width="6.3" height="40.00" fill="#5fd0cf"/><rect x="393.40" y="416.7" width="6.3" height="15.30" fill="#3d9af5"/><text x="396.55" y="442" font-size="3.6" fill="#777" text-anchor="middle">03-01</text><rect x="404.30" y="408.8" width="6.3" height="23.20" fill="#5fd0cf"/><rect x="404.30" y="419.8" width="6.3" height="12.20" fill="#3d9af5"/><text x="407.45" y="442" font-size="3.6" fill="#777" text-anchor="middle">03-01</text><rect x="415.20" y="401" width="6.3" height="31.00" fill="#5fd0cf"/><rect x="415.20" y="410.8" width="6.3" height="21.20" fill="#3d9af5"/><text x="418.35" y="442" font-size="3.6" fill="#777" text-anchor="middle">03-01</text><rect x="426.10" y="401" width="6.3" height="31.00" fill="#5fd0cf"/><rect x="426.10" y="410.8" width="6.3" height="21.20" fill="#3d9af5"/><text x="429.25" y="442" font-size="3.6" fill="#777" text-anchor="middle">03-01</text><rect x="437.00" y="363.3" width="6.3" height="68.70" fill="#5fd0cf"/><rect x="437.00" y="394" width="6.3" height="38.00" fill="#3d9af5"/><text x="440.15" y="442" font-size="3.6" fill="#777" text-anchor="middle">03-01</text><rect x="447.90" y="386" width="6.3" height="46.00" fill="#5fd0cf"/><rect x="447.90" y="407.6" width="6.3" height="24.40" fill="#3d9af5"/><text x="451.05" y="442" font-size="3.6" fill="#777" text-anchor="middle">03-01</text><rect x="458.80" y="400" width="6.3" height="32.00" fill="#5fd0cf"/><rect x="458.80" y="416.7" width="6.3" height="15.30" fill="#3d9af5"/><text x="461.95" y="442" font-size="3.6" fill="#777" text-anchor="middle">03-01</text><rect x="469.70" y="386" width="6.3" height="46.00" fill="#5fd0cf"/><rect x="469.70" y="407.6" width="6.3" height="24.40" fill="#3d9af5"/><text x="472.85" y="442" font-size="3.6" fill="#777" text-anchor="middle">03-01</text><rect x="480.60" y="386" width="6.3" height="46.00" fill="#5fd0cf"/><rect x="480.60" y="407.6" width="6.3" height="24.40" fill="#3d9af5"/><text x="483.75" y="442" font-size="3.6" fill="#777" text-anchor="middle">03-01</text></svg>
<div style="position:absolute;left:373px;top:378px;width:33px;height:27px;background:#fff;border:1px solid #ececec;border-radius:2px;box-shadow:0 1px 2px rgba(0,0,0,0.08);"></div>
<div style="position:absolute;left:376px;top:380.84px;height:5.32px;line-height:5.32px;font-size:3.8px;color:#555;white-space:nowrap;">03-12</div>
<div style="position:absolute;left:376px;top:391px;width:2px;height:2px;background:#5fd0cf;border-radius:50%;"></div>
<div style="position:absolute;left:380px;top:389.34px;height:5.32px;line-height:5.32px;font-size:3.8px;color:#555;white-space:nowrap;">点击:&nbsp;&nbsp;&nbsp;42</div>
<div style="position:absolute;left:376px;top:398.5px;width:2px;height:2.0px;background:#3d9af5;border-radius:50%;"></div>
<div style="position:absolute;left:380px;top:396.84px;height:5.32px;line-height:5.32px;font-size:3.8px;color:#555;white-space:nowrap;">打开:&nbsp;&nbsp;&nbsp;42</div>
<svg style="position:absolute;left:34px;top:330px" width="110" height="100" viewBox="0 0 532 484">
<path d="M100 100 L120 80 L135 95 L125 120 L110 125Z M95 130 L115 128 L118 140 L100 142Z M120 60 L140 55 L138 75 L122 78Z" fill="#7ea6ec"/>
<path d="M145 55 L175 45 L182 60 L172 78 L150 75Z" fill="#6f9ce9"/>
<path d="M195 45 L225 38 L240 55 L220 72 L198 68Z" fill="#d6e5fa"/>
<path d="M48 150 L78 140 L84 168 L76 188 L55 192 L46 172Z" fill="#4f8ce8"/>
<path d="M80 148 L140 140 L182 168 L172 216 L104 216 L82 192Z" fill="#8aa9ec"/>
<path d="M102 216 L172 216 L178 240 L152 266 L122 258 L100 236Z" fill="#4d95ee"/>
<path d="M120 258 L152 266 L162 292 L140 288Z" fill="#cfe0f8"/>
<path d="M160 298 L212 308 L216 346 L192 400 L172 392 L160 332Z" fill="#8fb2ee"/>
<path d="M165 340 L185 350 L180 395 L170 390Z" fill="#c6dbf7"/>
<path d="M238 188 L300 180 L312 215 L292 240 L245 240 L232 215Z" fill="#d9e7fb"/>
<path d="M240 252 L300 242 L322 282 L302 360 L282 372 L256 302Z" fill="#e6effc"/>
<path d="M258 290 L272 288 L270 300 L260 302Z" fill="#4d95ee"/>
<path d="M282 350 L298 345 L295 368 L284 370Z" fill="#8fb2ee"/>
<path d="M300 236 L345 228 L352 266 L322 272Z" fill="#a9c6f4"/>
<path d="M332 112 L360 108 L372 96 L382 104 L400 100 L425 112 L445 118 L470 140 L495 158 L482 170 L462 192 L448 215 L430 220 L400 214 L370 210 L335 214Z" fill="#f8d87a"/><path d="M372 70 L382 66 L386 90 L376 94Z" fill="#f8d87a"/><path d="M425 108 L440 104 L442 116Z" fill="#f8d87a"/>
<path d="M340 205 L380 210 L372 228 L345 228Z" fill="#a9c6f4"/>
<path d="M355 222 L415 206 L442 236 L412 272 L372 266 L354 246Z" fill="#2f6fe0"/>
<path d="M345 262 L376 270 L366 302 L354 296Z" fill="#7aa5ee"/>
<path d="M380 272 L430 290 L442 322 L402 312Z" fill="#dfeafb"/>
<path d="M420 230 L440 225 L445 250 L430 255Z" fill="#8fb2ee"/>
<path d="M400 332 L450 326 L462 372 L422 378 L400 362Z" fill="#b8d3f5"/>
<path d="M18 432 L66 430 L66 444 L18 446Z" fill="#b8d3f5"/>
</svg>
<div style="position:absolute;left:62.5px;top:344.5px;width:40.8px;height:30.0px;background:#fff;border:1px solid #eeeeee;border-radius:2px;box-shadow:0 1px 2px rgba(0,0,0,0.08);"></div>
<div style="position:absolute;left:66.5px;top:352.68px;height:5.04px;line-height:5.04px;font-size:3.6px;color:#555;white-space:nowrap;">12-04</div>
<div style="position:absolute;left:66.5px;top:364px;width:1.7999999999999972px;height:1.8000000000000114px;background:#3d9af5;border-radius:50%;"></div>
<div style="position:absolute;left:70px;top:362.48px;height:5.04px;line-height:5.04px;font-size:3.6px;color:#555;white-space:nowrap;">发送:&nbsp;&nbsp;&nbsp;42</div>
<div style="position:absolute;left:975.5px;top:211.3px;width:294.79999999999995px;height:254.7px;background:#fdfdfd;border-radius:7px;box-shadow:0 0 0 2px #eef1f7, 3px 3px 0 2px #ebebeb, 4px 4px 4px rgba(0,0,0,0.04);"></div>
<svg style="position:absolute;left:995px;top:225px" width="17" height="17" viewBox="0 0 17 17"><path d="M5.8 4.2 Q7 3.9 8.7 3.9 Q12.5 4.3 12.7 8 Q12.8 10.5 11.2 11.6 L5.8 11.6Z" fill="#2fc27f"/><path d="M7.6 14.1 A5.6 5.6 0 1 1 12.4 12.4" fill="none" stroke="#1688f4" stroke-width="1.7" stroke-linecap="round"/><path d="M12.4 12.4 L14.6 14.9" stroke="#1688f4" stroke-width="1.7" stroke-linecap="round"/><rect x="5.5" y="7.3" width="6.2" height="1.4" rx="0.5" fill="#1688f4"/><rect x="5.5" y="10.2" width="4" height="1.2" rx="0.5" fill="#1688f4"/></svg>
<div style="position:absolute;left:1017.5px;top:224.78px;height:20.44px;line-height:20.44px;font-size:14.6px;color:#333;white-space:nowrap;">云邮搜</div>
<div style="position:absolute;left:996.5px;top:256px;width:258.5px;height:1px;background:#e4e4e4;"></div>
<div style="position:absolute;left:996.5px;top:278.5px;width:123.5px;height:77.0px;background:#f3f3f3;"></div>
<div style="position:absolute;left:996.5px;top:322.40px;height:18.20px;line-height:18.20px;font-size:13px;color:#3c3c3c;white-space:nowrap;width:123.5px;text-align:center;">产品搜客户地址</div>
<div style="position:absolute;left:1131.5px;top:278.5px;width:123.5px;height:77.0px;background:#f3f3f3;"></div>
<div style="position:absolute;left:1131.5px;top:322.40px;height:18.20px;line-height:18.20px;font-size:13px;color:#3c3c3c;white-space:nowrap;width:123.5px;text-align:center;">网址搜客户邮箱</div>
<div style="position:absolute;left:996.5px;top:367.5px;width:123.5px;height:77.0px;background:#f3f3f3;"></div>
<div style="position:absolute;left:996.5px;top:411.40px;height:18.20px;line-height:18.20px;font-size:13px;color:#3c3c3c;white-space:nowrap;width:123.5px;text-align:center;">公司搜客户邮箱</div>
<div style="position:absolute;left:1131.5px;top:367.5px;width:123.5px;height:77.0px;background:#f3f3f3;"></div>
<div style="position:absolute;left:1131.5px;top:411.40px;height:18.20px;line-height:18.20px;font-size:13px;color:#3c3c3c;white-space:nowrap;width:123.5px;text-align:center;">邮箱验证</div>
<svg style="position:absolute;left:1050px;top:296px" width="18" height="18" viewBox="0 0 18 18"><path d="M9 0.3 L16.8 4.3 Q17.3 4.6 17.3 5.2 L17.3 12.8 Q17.3 13.4 16.8 13.7 L9 17.7 L1.2 13.7 Q0.7 13.4 0.7 12.8 L0.7 5.2 Q0.7 4.6 1.2 4.3Z" fill="#0f84f5"/><path d="M3.5 5.5 L9 8.8 L14.5 5.5 M9 8.8 L9 15" fill="none" stroke="#fff" stroke-width="1"/></svg>
<svg style="position:absolute;left:1185px;top:296px" width="17.5" height="17.5" viewBox="0 0 17 17"><rect x="0" y="0" width="17" height="17" rx="1.2" fill="#0f84f5"/><path d="M7.2 9.8 L9.8 7.2" stroke="#fff" stroke-width="1.3"/><path d="M6.3 8.3 L4.6 10 Q3.2 11.4 4.6 12.8 Q6 14.2 7.4 12.8 L9 11.2" fill="none" stroke="#fff" stroke-width="1.3"/><path d="M8 5.8 L9.6 4.2 Q11 2.8 12.4 4.2 Q13.8 5.6 12.4 7 L10.7 8.7" fill="none" stroke="#fff" stroke-width="1.3"/></svg>
<svg style="position:absolute;left:1049px;top:384.5px" width="19" height="19" viewBox="0 0 19 19"><path d="M0.3 1.8 L11.8 0.3 V18.5 H0.3Z" fill="#0f84f5"/><rect x="1.8" y="3.3" width="6" height="1.3" fill="#fff"/><rect x="1.8" y="6.8" width="6" height="1.3" fill="#fff"/><rect x="1.8" y="10.3" width="6" height="1.3" fill="#fff"/><rect x="1.8" y="13.8" width="6" height="1.3" fill="#fff"/><path d="M13.5 0.8 H15.6 V16.6 H18.2 V18.5 H13.5Z" fill="#0f84f5"/></svg>
<svg style="position:absolute;left:1184px;top:384px" width="19" height="19" viewBox="0 0 19 19"><circle cx="8.2" cy="4.8" r="4.4" fill="#0f84f5"/><path d="M0.3 18.3 Q0.5 10.5 8.2 10.5 Q10.5 10.5 12 11.5 L12 18.3Z" fill="#0f84f5"/><circle cx="12.8" cy="14.3" r="4.6" fill="#3a9af7" stroke="#f3f3f3" stroke-width="0.8"/><circle cx="12.8" cy="14.3" r="2.3" fill="none" stroke="#cfe6fd" stroke-width="0.6"/><path d="M10.5 14.3 H15.1" stroke="#cfe6fd" stroke-width="0.5"/></svg>
<div style="position:absolute;left:517px;top:4px;width:199px;height:39px;background:#0585ff;border-radius:20px;"></div>
<div style="position:absolute;left:533px;top:13.00px;height:21.00px;line-height:21.00px;font-size:15px;color:#fff;white-space:nowrap;">一键展示联系人联系方式</div>
<div style="position:absolute;left:129px;top:185px;width:152px;height:37.5px;background:#52c6a6;border-radius:19px;"></div>
<div style="position:absolute;left:160px;top:193.00px;height:21.00px;line-height:21.00px;font-size:15px;color:#fff;white-space:nowrap;font-weight:bold;">邮件发送统计</div>
</body></html>
